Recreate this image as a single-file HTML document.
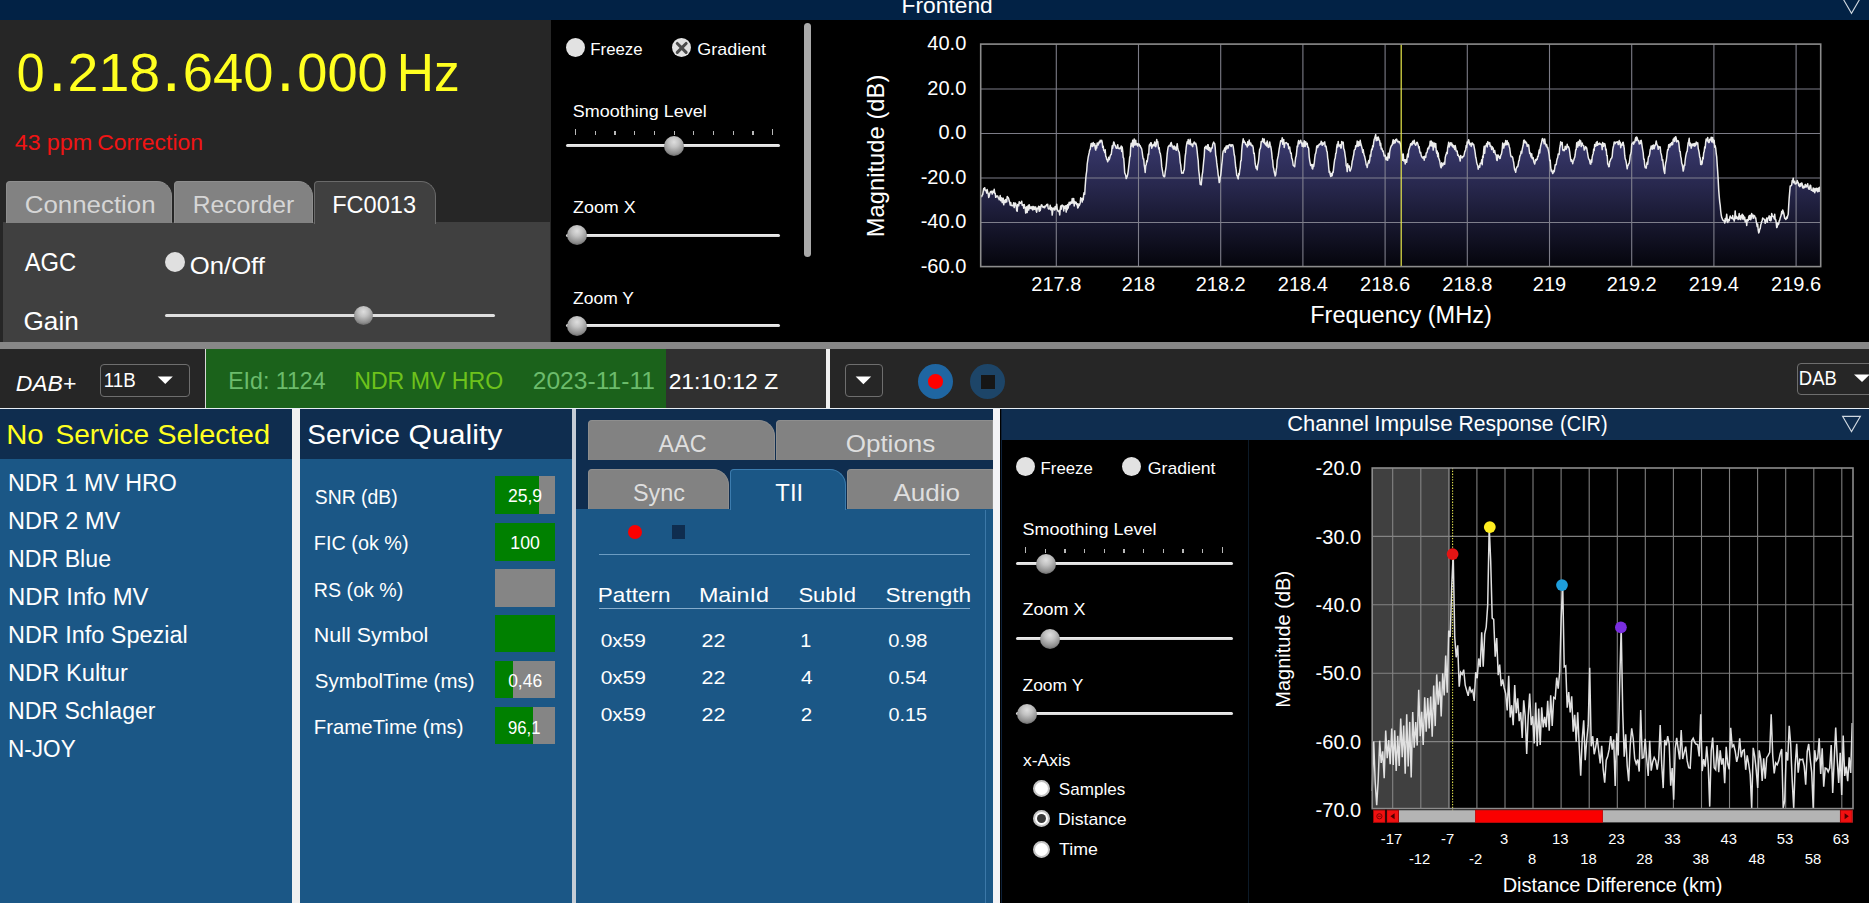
<!DOCTYPE html>
<html lang="en"><head><meta charset="utf-8"><title>DAB Receiver</title>
<style>
html,body{margin:0;padding:0;background:#000;}
body{width:1869px;height:903px;overflow:hidden;position:relative;font-family:"Liberation Sans", Arial, sans-serif;}
#bg div,#wd div,#ct div{position:absolute;}
svg{position:absolute;left:0;top:0;}
</style></head><body>
<div id="bg"><div style="left:0.0px;top:0.0px;width:1869.0px;height:20.4px;background:#022245;"></div>
<div style="left:0.0px;top:20.4px;width:550.5px;height:322.0px;background:#262626;"></div>
<div style="left:3.2px;top:221.5px;width:547.3px;height:120.5px;background:#404040;"></div>
<div style="left:550.5px;top:20.4px;width:1318.5px;height:321.6px;background:#000;"></div>
<div style="left:804.2px;top:22.8px;width:7.2px;height:234.0px;background:#a9a9a9;border-radius:3.6px;"></div>
<div style="left:0.0px;top:341.8px;width:1869.0px;height:7.3px;background:#878787;"></div>
<div style="left:0.0px;top:349.2px;width:1869.0px;height:58.6px;background:#262626;"></div>
<div style="left:666.0px;top:349.2px;width:160.0px;height:58.6px;background:#303030;"></div>
<div style="left:204.6px;top:349.2px;width:1.3px;height:58.6px;background:#d8d8d8;"></div>
<div style="left:205.9px;top:349.2px;width:460.1px;height:58.4px;background:#1b621b;"></div>
<div style="left:826.0px;top:349.2px;width:4.3px;height:59.4px;background:#f0f0f0;"></div>
<div style="left:0.0px;top:407.6px;width:1869.0px;height:1.5px;background:#e8eef4;"></div>
<div style="left:0.0px;top:409.1px;width:292.4px;height:494.0px;background:#1b5786;"></div>
<div style="left:0.0px;top:409.1px;width:292.4px;height:50.4px;background:#0f2d4f;"></div>
<div style="left:292.4px;top:409.1px;width:7.8px;height:494.0px;background:#f0f0f0;"></div>
<div style="left:300.2px;top:409.1px;width:272.0px;height:494.0px;background:#1b5786;"></div>
<div style="left:300.2px;top:409.1px;width:272.0px;height:50.4px;background:#0f2d4f;"></div>
<div style="left:572.2px;top:409.1px;width:4.0px;height:494.0px;background:#c4ccd6;"></div>
<div style="left:576.2px;top:409.1px;width:416.8px;height:494.0px;background:#1b5786;"></div>
<div style="left:576.2px;top:409.1px;width:416.8px;height:100.3px;background:#0f2d4f;"></div>
<div style="left:993.0px;top:409.1px;width:7.7px;height:494.0px;background:#f3f3f6;"></div>
<div style="left:1000.2px;top:409.1px;width:868.8px;height:494.0px;background:#000;"></div>
<div style="left:1000.6px;top:409.1px;width:868.8px;height:30.8px;background:#0f2d4f;"></div>
<div style="left:1000.6px;top:409.1px;width:1.2px;height:494.0px;background:#0c2038;"></div>
<div style="left:1248.0px;top:439.9px;width:1.2px;height:465.0px;background:#0c1a28;"></div></div>
<div id="wd"><div style="left:6.0px;top:181.2px;width:166.0px;height:41.8px;background:#828282;border-radius:4px 15px 0 0;box-sizing:border-box;border:1.2px solid #8e8e8e;border-bottom:none;"></div>
<div style="left:174.0px;top:181.2px;width:139.0px;height:41.8px;background:#828282;border-radius:4px 15px 0 0;box-sizing:border-box;border:1.2px solid #8e8e8e;border-bottom:none;"></div>
<div style="left:314.2px;top:181.2px;width:121.8px;height:42.8px;background:#404040;border-radius:4px 15px 0 0;box-sizing:border-box;border:1.2px solid #6a6a6a;border-bottom:none;"></div>
<div style="left:588.2px;top:420.1px;width:186.4px;height:40.2px;background:#828282;border-radius:4px 16px 0 0;box-sizing:border-box;border:1.2px solid #8e8e8e;border-bottom:none;"></div>
<div style="left:776.4px;top:420.1px;width:216.6px;height:40.2px;background:#828282;border-radius:4px 0px 0 0;box-sizing:border-box;border:1.2px solid #8e8e8e;border-bottom:none;"></div>
<div style="left:588.2px;top:468.9px;width:140.8px;height:40.5px;background:#828282;border-radius:4px 16px 0 0;box-sizing:border-box;border:1.2px solid #8e8e8e;border-bottom:none;"></div>
<div style="left:847.2px;top:468.9px;width:145.8px;height:40.5px;background:#828282;border-radius:4px 0px 0 0;box-sizing:border-box;border:1.2px solid #8e8e8e;border-bottom:none;"></div>
<div style="left:730.4px;top:468.9px;width:115.4px;height:41.1px;background:#1b5786;border-radius:4px 16px 0 0;box-sizing:border-box;border:1.2px solid #3c7cae;border-bottom:none;"></div>
<div style="left:985.2px;top:510.0px;width:1.0px;height:394.0px;background:#3c78a8;"></div>
<div style="left:598.8px;top:553.9px;width:371.4px;height:1.0px;background:#6c9cc2;"></div>
<div style="left:599.0px;top:607.8px;width:371.0px;height:1.1px;background:#86accc;"></div>
<div style="left:628.0px;top:525.0px;width:14.0px;height:14.0px;background:#fa0000;border-radius:50%;"></div>
<div style="left:672.0px;top:525.2px;width:13.3px;height:13.7px;background:#0f2d4f;"></div>
<div style="left:100.0px;top:364.3px;width:90.0px;height:32.4px;background:transparent;box-sizing:border-box;border:1.3px solid #6e6e6e;border-radius:4px;"></div>
<div style="left:845.3px;top:364.3px;width:37.8px;height:32.4px;background:transparent;box-sizing:border-box;border:1.3px solid #6e6e6e;border-radius:4px;"></div>
<div style="left:1797.2px;top:362.5px;width:90.0px;height:32.2px;background:transparent;box-sizing:border-box;border:1.3px solid #6e6e6e;border-radius:4px;"></div>
<div style="left:917.9px;top:364.2px;width:35.0px;height:35.0px;background:#1f66a2;border-radius:50%;"></div>
<div style="left:928.1px;top:374.4px;width:14.6px;height:14.6px;background:#ff0000;border-radius:50%;"></div>
<div style="left:970.3px;top:364.2px;width:35.0px;height:35.0px;background:#1d4568;border-radius:50%;"></div>
<div style="left:980.6px;top:374.5px;width:14.4px;height:14.4px;background:#161616;"></div>
<div style="left:495.1px;top:476.1px;width:59.9px;height:37.5px;background:#858585;"></div>
<div style="left:495.1px;top:476.1px;width:44.0px;height:37.5px;background:#008000;"></div>
<div style="left:495.1px;top:523.1px;width:59.9px;height:37.5px;background:#858585;"></div>
<div style="left:495.1px;top:523.1px;width:60.0px;height:37.5px;background:#008000;"></div>
<div style="left:495.1px;top:569.2px;width:59.9px;height:37.5px;background:#858585;"></div>
<div style="left:495.1px;top:614.8px;width:59.9px;height:37.5px;background:#858585;"></div>
<div style="left:495.1px;top:614.8px;width:60.0px;height:37.5px;background:#008000;"></div>
<div style="left:495.1px;top:660.6px;width:59.9px;height:37.5px;background:#858585;"></div>
<div style="left:495.1px;top:660.6px;width:17.9px;height:37.5px;background:#008000;"></div>
<div style="left:495.1px;top:706.7px;width:59.9px;height:37.5px;background:#858585;"></div>
<div style="left:495.1px;top:706.7px;width:37.9px;height:37.5px;background:#008000;"></div></div>
<svg width="1869" height="903" viewBox="0 0 1869 903">
<defs><linearGradient id="spg" gradientUnits="userSpaceOnUse" x1="0" y1="118" x2="0" y2="266.6"><stop offset="0" stop-color="#41417c"/><stop offset="0.45" stop-color="#28284e"/><stop offset="1" stop-color="#05050c"/></linearGradient></defs>
<polygon fill="url(#spg)" points="980.7,266.6 980.7,197.1 981.2,195.7 981.7,196.6 982.2,195.0 982.7,194.6 983.2,191.4 983.7,188.4 984.2,189.2 984.7,187.7 985.2,190.6 985.7,190.1 986.2,190.4 986.7,193.1 987.2,189.6 987.7,192.2 988.2,193.4 988.7,197.5 989.2,196.2 989.7,193.9 990.2,192.3 990.7,191.5 991.2,192.2 991.7,191.2 992.2,194.0 992.7,191.2 993.2,191.2 993.7,192.5 994.2,189.3 994.7,193.2 995.2,193.3 995.7,197.3 996.2,196.9 996.7,195.9 997.2,196.0 997.7,195.9 998.2,197.7 998.7,198.3 999.2,199.7 999.7,198.5 1000.2,195.5 1000.7,200.7 1001.2,198.7 1001.7,197.8 1002.2,202.6 1002.7,199.7 1003.2,198.2 1003.7,204.8 1004.2,200.6 1004.7,200.3 1005.2,202.5 1005.7,199.6 1006.2,200.4 1006.7,201.9 1007.2,196.5 1007.7,197.3 1008.2,197.5 1008.7,198.7 1009.2,201.1 1009.7,202.3 1010.2,205.0 1010.7,202.4 1011.2,205.6 1011.7,205.5 1012.2,205.5 1012.7,205.8 1013.2,205.8 1013.7,202.7 1014.2,207.6 1014.7,205.0 1015.2,203.0 1015.7,203.5 1016.2,205.8 1016.7,210.6 1017.2,211.1 1017.7,204.5 1018.2,205.7 1018.7,205.8 1019.2,201.8 1019.7,202.3 1020.2,203.4 1020.7,203.2 1021.2,202.9 1021.7,201.3 1022.2,205.3 1022.7,205.1 1023.2,204.9 1023.7,208.2 1024.2,204.5 1024.7,206.6 1025.2,207.5 1025.7,213.1 1026.2,210.0 1026.7,206.8 1027.2,212.5 1027.7,207.7 1028.2,205.6 1028.7,210.1 1029.2,204.7 1029.7,207.2 1030.2,208.6 1030.7,206.9 1031.2,207.2 1031.7,208.7 1032.2,206.5 1032.7,209.9 1033.2,209.7 1033.7,206.5 1034.2,207.6 1034.7,209.3 1035.2,206.9 1035.7,207.0 1036.2,210.9 1036.7,212.2 1037.2,208.2 1037.7,208.8 1038.2,208.0 1038.7,206.2 1039.2,211.3 1039.7,206.7 1040.2,210.5 1040.7,208.1 1041.2,205.2 1041.7,204.8 1042.2,205.9 1042.7,206.8 1043.2,207.4 1043.7,207.3 1044.2,206.3 1044.7,207.8 1045.2,206.4 1045.7,205.9 1046.2,205.7 1046.7,204.4 1047.2,205.7 1047.7,204.3 1048.2,208.4 1048.7,209.1 1049.2,209.0 1049.7,208.0 1050.2,205.3 1050.7,209.8 1051.2,209.5 1051.7,207.5 1052.2,215.1 1052.7,211.0 1053.2,208.5 1053.7,208.0 1054.2,208.4 1054.7,210.1 1055.2,206.4 1055.7,207.2 1056.2,209.0 1056.7,204.2 1057.2,209.1 1057.7,210.6 1058.2,211.4 1058.7,211.7 1059.2,210.4 1059.7,215.0 1060.2,209.5 1060.7,206.1 1061.2,209.2 1061.7,205.5 1062.2,205.0 1062.7,206.0 1063.2,205.8 1063.7,211.0 1064.2,206.8 1064.7,208.3 1065.2,205.7 1065.7,206.4 1066.2,212.1 1066.7,205.5 1067.2,209.8 1067.7,204.5 1068.2,208.1 1068.7,204.3 1069.2,202.2 1069.7,204.8 1070.2,204.1 1070.7,202.1 1071.2,202.7 1071.7,203.3 1072.2,198.6 1072.7,201.2 1073.2,203.1 1073.7,198.5 1074.2,206.0 1074.7,201.5 1075.2,203.6 1075.7,202.2 1076.2,202.5 1076.7,204.7 1077.2,203.7 1077.7,207.9 1078.2,207.4 1078.7,204.1 1079.2,205.8 1079.7,204.4 1080.2,202.9 1080.7,197.8 1081.2,198.9 1081.7,198.7 1082.2,202.1 1082.7,198.2 1083.2,199.9 1083.7,194.5 1084.2,192.5 1084.7,194.2 1085.2,186.1 1085.7,179.4 1086.2,174.3 1086.7,171.0 1087.2,164.0 1087.7,160.7 1088.2,157.1 1088.7,154.8 1089.2,152.7 1089.7,149.9 1090.2,149.5 1090.7,146.2 1091.2,143.4 1091.7,143.5 1092.2,146.3 1092.7,146.5 1093.2,142.4 1093.7,144.2 1094.2,145.6 1094.7,143.8 1095.2,148.1 1095.7,150.1 1096.2,145.8 1096.7,147.9 1097.2,143.1 1097.7,143.7 1098.2,145.1 1098.7,143.0 1099.2,141.9 1099.7,142.8 1100.2,140.2 1100.7,141.8 1101.2,140.8 1101.7,140.3 1102.2,142.4 1102.7,147.3 1103.2,146.2 1103.7,150.4 1104.2,150.2 1104.7,152.6 1105.2,149.8 1105.7,156.3 1106.2,156.9 1106.7,159.4 1107.2,159.8 1107.7,161.8 1108.2,160.3 1108.7,157.3 1109.2,159.8 1109.7,158.1 1110.2,155.9 1110.7,154.8 1111.2,154.6 1111.7,150.8 1112.2,145.7 1112.7,148.2 1113.2,145.1 1113.7,141.9 1114.2,142.8 1114.7,145.1 1115.2,145.2 1115.7,147.0 1116.2,148.3 1116.7,148.3 1117.2,146.7 1117.7,144.7 1118.2,148.3 1118.7,148.5 1119.2,148.5 1119.7,148.7 1120.2,147.4 1120.7,148.5 1121.2,146.1 1121.7,151.5 1122.2,146.9 1122.7,151.1 1123.2,157.6 1123.7,158.0 1124.2,164.9 1124.7,172.9 1125.2,173.9 1125.7,175.2 1126.2,178.6 1126.7,177.5 1127.2,176.4 1127.7,174.3 1128.2,171.1 1128.7,166.7 1129.2,162.6 1129.7,157.1 1130.2,156.1 1130.7,147.2 1131.2,143.2 1131.7,146.0 1132.2,145.4 1132.7,140.2 1133.2,147.1 1133.7,142.5 1134.2,138.9 1134.7,145.1 1135.2,141.9 1135.7,140.2 1136.2,144.8 1136.7,143.8 1137.2,143.6 1137.7,146.0 1138.2,144.3 1138.7,143.9 1139.2,144.1 1139.7,146.0 1140.2,145.7 1140.7,147.3 1141.2,147.9 1141.7,149.0 1142.2,152.0 1142.7,156.1 1143.2,158.8 1143.7,158.7 1144.2,165.0 1144.7,168.0 1145.2,172.4 1145.7,165.7 1146.2,164.9 1146.7,160.8 1147.2,161.8 1147.7,158.5 1148.2,153.9 1148.7,154.7 1149.2,145.8 1149.7,144.2 1150.2,145.7 1150.7,142.8 1151.2,142.8 1151.7,148.2 1152.2,146.6 1152.7,145.5 1153.2,144.4 1153.7,144.6 1154.2,145.9 1154.7,142.0 1155.2,143.8 1155.7,146.7 1156.2,144.9 1156.7,139.4 1157.2,142.1 1157.7,141.5 1158.2,145.5 1158.7,148.9 1159.2,147.7 1159.7,152.8 1160.2,153.1 1160.7,156.0 1161.2,159.6 1161.7,166.4 1162.2,169.3 1162.7,172.2 1163.2,175.5 1163.7,176.2 1164.2,176.8 1164.7,176.4 1165.2,171.9 1165.7,169.1 1166.2,165.5 1166.7,159.6 1167.2,153.7 1167.7,149.9 1168.2,146.8 1168.7,146.4 1169.2,145.4 1169.7,145.2 1170.2,146.3 1170.7,143.4 1171.2,142.5 1171.7,144.7 1172.2,147.1 1172.7,146.1 1173.2,148.9 1173.7,149.0 1174.2,145.9 1174.7,149.0 1175.2,146.9 1175.7,148.7 1176.2,150.3 1176.7,147.3 1177.2,143.7 1177.7,147.7 1178.2,150.3 1178.7,151.4 1179.2,152.2 1179.7,156.7 1180.2,162.3 1180.7,164.9 1181.2,169.7 1181.7,173.2 1182.2,173.1 1182.7,172.7 1183.2,173.1 1183.7,170.3 1184.2,169.9 1184.7,162.6 1185.2,156.2 1185.7,152.9 1186.2,147.3 1186.7,144.1 1187.2,141.7 1187.7,143.4 1188.2,139.5 1188.7,141.2 1189.2,144.3 1189.7,143.1 1190.2,139.2 1190.7,144.8 1191.2,143.8 1191.7,144.1 1192.2,145.8 1192.7,146.6 1193.2,143.5 1193.7,143.4 1194.2,142.0 1194.7,142.9 1195.2,144.3 1195.7,143.2 1196.2,145.0 1196.7,147.4 1197.2,151.7 1197.7,157.0 1198.2,160.7 1198.7,170.0 1199.2,174.2 1199.7,178.8 1200.2,184.5 1200.7,183.4 1201.2,184.8 1201.7,180.0 1202.2,174.8 1202.7,171.8 1203.2,166.5 1203.7,161.0 1204.2,156.5 1204.7,147.5 1205.2,147.3 1205.7,146.2 1206.2,148.3 1206.7,146.2 1207.2,149.5 1207.7,144.8 1208.2,144.7 1208.7,150.3 1209.2,147.8 1209.7,147.6 1210.2,151.7 1210.7,151.5 1211.2,149.2 1211.7,147.7 1212.2,147.9 1212.7,144.6 1213.2,143.3 1213.7,142.1 1214.2,143.4 1214.7,143.7 1215.2,147.6 1215.7,155.3 1216.2,157.3 1216.7,162.4 1217.2,166.4 1217.7,170.2 1218.2,175.1 1218.7,177.6 1219.2,182.6 1219.7,181.4 1220.2,177.5 1220.7,175.3 1221.2,170.8 1221.7,165.2 1222.2,161.0 1222.7,154.2 1223.2,151.0 1223.7,150.6 1224.2,150.0 1224.7,148.1 1225.2,152.3 1225.7,148.0 1226.2,145.9 1226.7,148.9 1227.2,145.8 1227.7,146.2 1228.2,148.0 1228.7,145.2 1229.2,145.1 1229.7,144.5 1230.2,144.7 1230.7,146.0 1231.2,146.5 1231.7,144.8 1232.2,145.1 1232.7,144.9 1233.2,146.7 1233.7,150.5 1234.2,154.5 1234.7,156.5 1235.2,162.0 1235.7,167.2 1236.2,169.9 1236.7,175.2 1237.2,175.9 1237.7,177.7 1238.2,178.9 1238.7,173.5 1239.2,174.9 1239.7,170.2 1240.2,167.8 1240.7,161.0 1241.2,160.8 1241.7,151.0 1242.2,145.5 1242.7,142.1 1243.2,138.8 1243.7,142.3 1244.2,140.9 1244.7,142.6 1245.2,142.5 1245.7,144.5 1246.2,144.9 1246.7,144.6 1247.2,146.9 1247.7,141.7 1248.2,145.6 1248.7,143.2 1249.2,140.1 1249.7,144.6 1250.2,144.7 1250.7,143.0 1251.2,144.9 1251.7,145.8 1252.2,145.4 1252.7,145.9 1253.2,147.7 1253.7,153.5 1254.2,153.0 1254.7,158.2 1255.2,163.7 1255.7,166.3 1256.2,168.4 1256.7,166.4 1257.2,169.8 1257.7,165.0 1258.2,163.1 1258.7,159.5 1259.2,153.8 1259.7,149.2 1260.2,148.7 1260.7,146.8 1261.2,141.6 1261.7,141.8 1262.2,141.6 1262.7,138.6 1263.2,140.2 1263.7,142.6 1264.2,139.0 1264.7,143.6 1265.2,143.8 1265.7,145.0 1266.2,142.8 1266.7,145.9 1267.2,141.0 1267.7,143.9 1268.2,147.4 1268.7,147.3 1269.2,146.5 1269.7,141.9 1270.2,145.2 1270.7,146.3 1271.2,149.0 1271.7,152.9 1272.2,158.4 1272.7,160.7 1273.2,167.0 1273.7,168.5 1274.2,171.8 1274.7,173.8 1275.2,176.0 1275.7,174.7 1276.2,169.8 1276.7,167.4 1277.2,160.3 1277.7,158.2 1278.2,155.9 1278.7,152.4 1279.2,148.9 1279.7,146.2 1280.2,143.4 1280.7,140.7 1281.2,141.1 1281.7,141.4 1282.2,137.8 1282.7,144.3 1283.2,143.2 1283.7,139.4 1284.2,147.4 1284.7,144.0 1285.2,142.9 1285.7,142.8 1286.2,142.6 1286.7,143.2 1287.2,143.5 1287.7,144.8 1288.2,143.8 1288.7,148.8 1289.2,147.6 1289.7,147.1 1290.2,151.3 1290.7,153.2 1291.2,153.1 1291.7,158.3 1292.2,158.9 1292.7,161.7 1293.2,165.3 1293.7,165.8 1294.2,166.1 1294.7,166.6 1295.2,161.4 1295.7,157.2 1296.2,156.1 1296.7,151.4 1297.2,146.0 1297.7,146.6 1298.2,142.3 1298.7,140.4 1299.2,143.7 1299.7,142.2 1300.2,142.1 1300.7,140.2 1301.2,142.9 1301.7,142.3 1302.2,146.3 1302.7,143.9 1303.2,143.3 1303.7,146.8 1304.2,140.8 1304.7,142.6 1305.2,146.4 1305.7,141.7 1306.2,144.4 1306.7,143.7 1307.2,143.2 1307.7,147.2 1308.2,147.0 1308.7,148.4 1309.2,156.6 1309.7,160.6 1310.2,163.2 1310.7,165.6 1311.2,165.6 1311.7,164.5 1312.2,168.4 1312.7,168.9 1313.2,164.4 1313.7,166.5 1314.2,163.5 1314.7,158.4 1315.2,154.6 1315.7,153.3 1316.2,150.8 1316.7,146.3 1317.2,145.8 1317.7,147.5 1318.2,145.3 1318.7,145.6 1319.2,144.2 1319.7,144.5 1320.2,143.5 1320.7,144.0 1321.2,141.3 1321.7,142.1 1322.2,145.3 1322.7,143.0 1323.2,144.6 1323.7,143.3 1324.2,142.5 1324.7,141.9 1325.2,146.4 1325.7,145.8 1326.2,146.8 1326.7,150.9 1327.2,151.8 1327.7,158.1 1328.2,160.7 1328.7,167.4 1329.2,172.4 1329.7,171.4 1330.2,174.3 1330.7,176.4 1331.2,173.6 1331.7,176.1 1332.2,175.5 1332.7,171.9 1333.2,172.1 1333.7,167.4 1334.2,163.1 1334.7,159.4 1335.2,158.3 1335.7,153.6 1336.2,153.0 1336.7,147.3 1337.2,144.3 1337.7,147.0 1338.2,141.4 1338.7,145.7 1339.2,145.0 1339.7,146.2 1340.2,144.8 1340.7,148.0 1341.2,147.9 1341.7,141.4 1342.2,142.1 1342.7,143.7 1343.2,142.2 1343.7,148.7 1344.2,149.6 1344.7,152.0 1345.2,155.9 1345.7,159.2 1346.2,166.0 1346.7,166.4 1347.2,171.6 1347.7,163.8 1348.2,167.2 1348.7,166.2 1349.2,165.9 1349.7,170.7 1350.2,170.9 1350.7,169.6 1351.2,168.2 1351.7,165.4 1352.2,161.3 1352.7,159.6 1353.2,156.8 1353.7,154.8 1354.2,150.4 1354.7,149.5 1355.2,149.5 1355.7,145.7 1356.2,145.6 1356.7,146.6 1357.2,141.1 1357.7,142.9 1358.2,146.2 1358.7,141.7 1359.2,143.2 1359.7,145.4 1360.2,140.2 1360.7,143.6 1361.2,145.0 1361.7,147.0 1362.2,149.0 1362.7,152.5 1363.2,149.7 1363.7,153.5 1364.2,155.4 1364.7,156.6 1365.2,159.1 1365.7,161.4 1366.2,165.0 1366.7,164.9 1367.2,167.5 1367.7,164.3 1368.2,162.6 1368.7,160.6 1369.2,162.9 1369.7,160.4 1370.2,155.1 1370.7,156.5 1371.2,151.7 1371.7,148.9 1372.2,149.6 1372.7,145.7 1373.2,146.8 1373.7,142.3 1374.2,139.4 1374.7,138.2 1375.2,136.4 1375.7,134.6 1376.2,140.7 1376.7,139.8 1377.2,137.6 1377.7,140.2 1378.2,137.1 1378.7,138.6 1379.2,140.1 1379.7,140.8 1380.2,145.6 1380.7,143.3 1381.2,148.9 1381.7,148.1 1382.2,149.5 1382.7,151.3 1383.2,151.1 1383.7,153.6 1384.2,156.1 1384.7,155.9 1385.2,155.3 1385.7,159.1 1386.2,159.9 1386.7,157.3 1387.2,157.5 1387.7,160.3 1388.2,153.2 1388.7,153.4 1389.2,158.0 1389.7,151.6 1390.2,149.1 1390.7,147.2 1391.2,146.1 1391.7,145.2 1392.2,145.0 1392.7,142.0 1393.2,139.7 1393.7,143.6 1394.2,142.5 1394.7,140.5 1395.2,142.7 1395.7,139.6 1396.2,140.3 1396.7,139.1 1397.2,141.1 1397.7,141.8 1398.2,141.4 1398.7,141.3 1399.2,142.7 1399.7,141.8 1400.2,143.2 1400.7,145.5 1401.2,149.4 1401.7,154.6 1402.2,156.0 1402.7,160.3 1403.2,153.9 1403.7,160.9 1404.2,160.0 1404.7,159.7 1405.2,163.9 1405.7,160.0 1406.2,159.5 1406.7,162.3 1407.2,156.5 1407.7,154.0 1408.2,157.0 1408.7,150.3 1409.2,149.1 1409.7,147.4 1410.2,145.7 1410.7,143.8 1411.2,145.0 1411.7,143.1 1412.2,144.7 1412.7,141.3 1413.2,143.4 1413.7,142.0 1414.2,140.2 1414.7,143.7 1415.2,144.6 1415.7,145.3 1416.2,144.1 1416.7,142.4 1417.2,142.3 1417.7,143.6 1418.2,145.2 1418.7,147.9 1419.2,146.8 1419.7,151.4 1420.2,152.9 1420.7,152.4 1421.2,155.5 1421.7,156.6 1422.2,157.4 1422.7,158.0 1423.2,156.7 1423.7,157.4 1424.2,160.2 1424.7,156.3 1425.2,156.4 1425.7,157.5 1426.2,152.9 1426.7,152.8 1427.2,151.9 1427.7,148.7 1428.2,147.9 1428.7,148.8 1429.2,146.1 1429.7,146.4 1430.2,141.3 1430.7,145.6 1431.2,141.1 1431.7,146.0 1432.2,143.8 1432.7,142.2 1433.2,150.1 1433.7,146.0 1434.2,143.1 1434.7,144.6 1435.2,147.2 1435.7,143.4 1436.2,150.1 1436.7,153.2 1437.2,151.0 1437.7,156.8 1438.2,152.9 1438.7,157.9 1439.2,159.4 1439.7,161.0 1440.2,164.0 1440.7,166.9 1441.2,167.8 1441.7,162.7 1442.2,163.9 1442.7,165.7 1443.2,163.8 1443.7,164.0 1444.2,162.2 1444.7,164.3 1445.2,157.7 1445.7,155.6 1446.2,154.3 1446.7,152.2 1447.2,153.6 1447.7,147.4 1448.2,145.8 1448.7,142.2 1449.2,147.0 1449.7,145.3 1450.2,143.5 1450.7,142.8 1451.2,145.0 1451.7,143.0 1452.2,146.2 1452.7,144.8 1453.2,147.4 1453.7,145.8 1454.2,147.5 1454.7,149.4 1455.2,145.6 1455.7,147.9 1456.2,151.1 1456.7,151.1 1457.2,151.1 1457.7,155.3 1458.2,154.8 1458.7,156.3 1459.2,156.7 1459.7,158.5 1460.2,161.0 1460.7,155.4 1461.2,157.1 1461.7,157.6 1462.2,157.9 1462.7,156.5 1463.2,156.8 1463.7,156.3 1464.2,154.6 1464.7,151.9 1465.2,150.9 1465.7,149.4 1466.2,145.6 1466.7,147.2 1467.2,141.9 1467.7,143.7 1468.2,141.2 1468.7,139.8 1469.2,142.1 1469.7,144.7 1470.2,143.6 1470.7,143.4 1471.2,146.4 1471.7,144.1 1472.2,142.9 1472.7,144.4 1473.2,144.1 1473.7,144.6 1474.2,147.3 1474.7,149.8 1475.2,153.2 1475.7,157.3 1476.2,159.0 1476.7,162.6 1477.2,164.4 1477.7,165.5 1478.2,169.2 1478.7,166.9 1479.2,166.1 1479.7,167.3 1480.2,163.3 1480.7,163.3 1481.2,163.3 1481.7,159.7 1482.2,164.8 1482.7,155.9 1483.2,157.5 1483.7,150.3 1484.2,146.3 1484.7,153.3 1485.2,146.1 1485.7,145.8 1486.2,145.6 1486.7,143.4 1487.2,147.0 1487.7,141.7 1488.2,142.5 1488.7,143.5 1489.2,144.2 1489.7,142.6 1490.2,146.3 1490.7,145.5 1491.2,147.2 1491.7,149.6 1492.2,146.8 1492.7,147.8 1493.2,148.2 1493.7,152.3 1494.2,151.3 1494.7,150.5 1495.2,153.5 1495.7,154.7 1496.2,155.0 1496.7,159.9 1497.2,160.5 1497.7,155.1 1498.2,155.1 1498.7,157.0 1499.2,156.5 1499.7,158.6 1500.2,158.4 1500.7,155.1 1501.2,154.9 1501.7,152.6 1502.2,149.3 1502.7,143.0 1503.2,144.0 1503.7,148.1 1504.2,145.8 1504.7,143.3 1505.2,145.0 1505.7,140.6 1506.2,143.6 1506.7,144.7 1507.2,140.8 1507.7,144.4 1508.2,142.8 1508.7,144.1 1509.2,146.5 1509.7,148.1 1510.2,152.0 1510.7,155.4 1511.2,156.7 1511.7,156.2 1512.2,156.7 1512.7,157.6 1513.2,160.4 1513.7,162.6 1514.2,167.0 1514.7,170.0 1515.2,170.3 1515.7,172.2 1516.2,168.6 1516.7,167.6 1517.2,166.6 1517.7,166.8 1518.2,164.8 1518.7,161.0 1519.2,160.7 1519.7,156.6 1520.2,155.4 1520.7,154.2 1521.2,151.2 1521.7,153.1 1522.2,149.5 1522.7,147.1 1523.2,145.3 1523.7,140.5 1524.2,140.0 1524.7,142.7 1525.2,141.2 1525.7,141.7 1526.2,143.4 1526.7,143.1 1527.2,146.5 1527.7,145.3 1528.2,144.8 1528.7,145.2 1529.2,149.8 1529.7,153.4 1530.2,152.9 1530.7,155.4 1531.2,157.1 1531.7,153.8 1532.2,158.6 1532.7,158.7 1533.2,157.6 1533.7,161.2 1534.2,162.7 1534.7,164.0 1535.2,161.3 1535.7,159.4 1536.2,160.5 1536.7,159.0 1537.2,159.4 1537.7,156.2 1538.2,156.4 1538.7,153.3 1539.2,150.1 1539.7,152.9 1540.2,148.4 1540.7,145.6 1541.2,144.1 1541.7,141.8 1542.2,139.1 1542.7,138.6 1543.2,140.3 1543.7,141.0 1544.2,143.8 1544.7,138.9 1545.2,142.7 1545.7,144.0 1546.2,146.1 1546.7,144.8 1547.2,147.7 1547.7,147.2 1548.2,149.7 1548.7,152.2 1549.2,155.1 1549.7,160.8 1550.2,160.1 1550.7,167.0 1551.2,171.1 1551.7,170.0 1552.2,172.0 1552.7,173.6 1553.2,172.7 1553.7,170.6 1554.2,171.7 1554.7,168.5 1555.2,164.7 1555.7,164.9 1556.2,164.3 1556.7,160.8 1557.2,158.7 1557.7,157.6 1558.2,154.0 1558.7,153.9 1559.2,154.4 1559.7,148.2 1560.2,146.0 1560.7,141.8 1561.2,144.6 1561.7,144.0 1562.2,142.4 1562.7,149.8 1563.2,150.4 1563.7,149.8 1564.2,150.6 1564.7,149.5 1565.2,146.3 1565.7,147.4 1566.2,149.2 1566.7,147.7 1567.2,144.3 1567.7,146.9 1568.2,146.5 1568.7,147.2 1569.2,148.8 1569.7,151.8 1570.2,156.0 1570.7,159.3 1571.2,161.3 1571.7,159.8 1572.2,161.4 1572.7,163.7 1573.2,161.2 1573.7,160.3 1574.2,158.4 1574.7,157.3 1575.2,154.5 1575.7,149.7 1576.2,149.6 1576.7,142.7 1577.2,143.2 1577.7,147.1 1578.2,141.6 1578.7,142.6 1579.2,145.6 1579.7,140.1 1580.2,142.4 1580.7,141.0 1581.2,146.6 1581.7,143.3 1582.2,143.1 1582.7,144.7 1583.2,145.8 1583.7,145.7 1584.2,150.1 1584.7,149.2 1585.2,148.3 1585.7,146.6 1586.2,147.5 1586.7,148.1 1587.2,151.2 1587.7,153.8 1588.2,157.1 1588.7,159.0 1589.2,159.5 1589.7,161.1 1590.2,163.9 1590.7,164.1 1591.2,159.8 1591.7,162.2 1592.2,157.1 1592.7,154.8 1593.2,153.7 1593.7,148.9 1594.2,150.5 1594.7,144.4 1595.2,145.3 1595.7,146.3 1596.2,142.6 1596.7,145.2 1597.2,141.5 1597.7,145.2 1598.2,143.9 1598.7,143.6 1599.2,144.1 1599.7,143.1 1600.2,144.2 1600.7,144.1 1601.2,144.6 1601.7,144.3 1602.2,149.6 1602.7,142.5 1603.2,144.5 1603.7,146.2 1604.2,143.8 1604.7,143.6 1605.2,145.3 1605.7,150.0 1606.2,149.2 1606.7,155.4 1607.2,155.5 1607.7,164.1 1608.2,164.3 1608.7,166.7 1609.2,166.6 1609.7,161.5 1610.2,161.1 1610.7,159.3 1611.2,158.5 1611.7,158.0 1612.2,156.2 1612.7,150.2 1613.2,147.2 1613.7,145.4 1614.2,142.0 1614.7,142.7 1615.2,143.6 1615.7,142.3 1616.2,142.2 1616.7,142.1 1617.2,142.5 1617.7,141.8 1618.2,144.5 1618.7,144.4 1619.2,140.6 1619.7,143.5 1620.2,142.3 1620.7,147.7 1621.2,145.2 1621.7,144.0 1622.2,145.2 1622.7,142.4 1623.2,142.3 1623.7,145.5 1624.2,148.1 1624.7,155.2 1625.2,158.8 1625.7,159.8 1626.2,162.1 1626.7,165.6 1627.2,168.8 1627.7,165.8 1628.2,165.3 1628.7,163.8 1629.2,163.2 1629.7,159.8 1630.2,155.5 1630.7,153.9 1631.2,152.0 1631.7,144.6 1632.2,143.2 1632.7,143.2 1633.2,142.0 1633.7,144.2 1634.2,142.0 1634.7,142.4 1635.2,139.7 1635.7,137.6 1636.2,140.6 1636.7,137.0 1637.2,137.9 1637.7,140.0 1638.2,140.9 1638.7,140.5 1639.2,144.0 1639.7,142.8 1640.2,143.7 1640.7,140.6 1641.2,140.3 1641.7,143.4 1642.2,146.9 1642.7,150.0 1643.2,152.9 1643.7,159.3 1644.2,159.0 1644.7,165.3 1645.2,167.7 1645.7,167.2 1646.2,168.1 1646.7,164.1 1647.2,162.3 1647.7,164.3 1648.2,158.4 1648.7,156.4 1649.2,156.2 1649.7,153.8 1650.2,149.7 1650.7,148.7 1651.2,145.9 1651.7,147.8 1652.2,149.2 1652.7,145.6 1653.2,148.6 1653.7,144.9 1654.2,148.7 1654.7,146.3 1655.2,145.4 1655.7,144.0 1656.2,141.0 1656.7,143.5 1657.2,144.8 1657.7,146.0 1658.2,149.3 1658.7,146.6 1659.2,146.8 1659.7,147.8 1660.2,147.0 1660.7,152.4 1661.2,154.1 1661.7,156.4 1662.2,160.5 1662.7,159.7 1663.2,164.2 1663.7,169.0 1664.2,171.4 1664.7,173.4 1665.2,166.5 1665.7,162.4 1666.2,161.0 1666.7,157.1 1667.2,152.4 1667.7,149.5 1668.2,149.8 1668.7,144.8 1669.2,144.7 1669.7,147.1 1670.2,143.8 1670.7,145.6 1671.2,144.2 1671.7,142.4 1672.2,144.7 1672.7,144.3 1673.2,139.3 1673.7,140.7 1674.2,138.1 1674.7,141.4 1675.2,137.5 1675.7,136.7 1676.2,138.3 1676.7,141.9 1677.2,140.5 1677.7,141.1 1678.2,140.8 1678.7,142.2 1679.2,146.7 1679.7,151.4 1680.2,151.4 1680.7,156.6 1681.2,158.3 1681.7,163.3 1682.2,164.5 1682.7,167.1 1683.2,171.1 1683.7,169.0 1684.2,164.9 1684.7,165.5 1685.2,160.0 1685.7,156.3 1686.2,153.9 1686.7,151.9 1687.2,151.3 1687.7,146.3 1688.2,142.7 1688.7,141.4 1689.2,138.3 1689.7,145.7 1690.2,143.0 1690.7,144.1 1691.2,148.2 1691.7,146.1 1692.2,143.9 1692.7,145.4 1693.2,144.3 1693.7,143.8 1694.2,146.2 1694.7,143.6 1695.2,145.8 1695.7,145.0 1696.2,142.1 1696.7,144.1 1697.2,143.4 1697.7,142.8 1698.2,148.3 1698.7,150.4 1699.2,152.8 1699.7,157.2 1700.2,158.0 1700.7,164.5 1701.2,161.3 1701.7,164.5 1702.2,163.0 1702.7,157.3 1703.2,158.9 1703.7,152.8 1704.2,151.6 1704.7,146.8 1705.2,148.0 1705.7,142.0 1706.2,138.9 1706.7,140.7 1707.2,140.5 1707.7,137.4 1708.2,141.8 1708.7,142.5 1709.2,142.4 1709.7,139.3 1710.2,140.0 1710.7,140.1 1711.2,137.2 1711.7,141.8 1712.2,139.8 1712.7,137.5 1713.2,142.7 1713.7,140.1 1714.2,140.5 1714.7,147.2 1715.2,145.8 1715.7,148.1 1716.2,153.3 1716.7,156.8 1717.2,164.6 1717.7,171.7 1718.2,180.1 1718.7,189.9 1719.2,196.2 1719.7,201.8 1720.2,205.3 1720.7,211.0 1721.2,214.8 1721.7,217.4 1722.2,218.5 1722.7,220.1 1723.2,220.1 1723.7,220.8 1724.2,220.7 1724.7,223.1 1725.2,218.6 1725.7,221.5 1726.2,218.6 1726.7,214.2 1727.2,219.2 1727.7,222.5 1728.2,219.6 1728.7,221.0 1729.2,220.8 1729.7,218.1 1730.2,215.9 1730.7,217.7 1731.2,217.5 1731.7,218.4 1732.2,218.5 1732.7,215.5 1733.2,219.2 1733.7,219.2 1734.2,221.0 1734.7,218.1 1735.2,210.9 1735.7,218.6 1736.2,216.3 1736.7,217.0 1737.2,218.6 1737.7,217.4 1738.2,219.5 1738.7,217.3 1739.2,213.6 1739.7,219.0 1740.2,215.8 1740.7,219.6 1741.2,217.0 1741.7,215.6 1742.2,214.3 1742.7,219.1 1743.2,215.3 1743.7,216.8 1744.2,219.5 1744.7,217.2 1745.2,221.8 1745.7,221.1 1746.2,220.1 1746.7,225.5 1747.2,219.7 1747.7,220.4 1748.2,220.7 1748.7,217.0 1749.2,215.8 1749.7,219.3 1750.2,215.2 1750.7,219.7 1751.2,218.3 1751.7,213.6 1752.2,216.0 1752.7,215.3 1753.2,218.3 1753.7,215.2 1754.2,215.8 1754.7,215.9 1755.2,218.2 1755.7,217.7 1756.2,221.3 1756.7,223.8 1757.2,226.6 1757.7,224.0 1758.2,230.1 1758.7,232.9 1759.2,231.9 1759.7,229.1 1760.2,228.6 1760.7,225.1 1761.2,223.5 1761.7,221.5 1762.2,220.5 1762.7,218.0 1763.2,218.5 1763.7,218.9 1764.2,219.2 1764.7,219.8 1765.2,223.3 1765.7,220.2 1766.2,220.7 1766.7,217.9 1767.2,222.3 1767.7,218.9 1768.2,218.0 1768.7,217.1 1769.2,215.9 1769.7,220.3 1770.2,216.7 1770.7,220.8 1771.2,219.8 1771.7,213.6 1772.2,215.3 1772.7,216.5 1773.2,216.6 1773.7,216.6 1774.2,218.7 1774.7,214.3 1775.2,219.6 1775.7,219.6 1776.2,222.5 1776.7,227.6 1777.2,227.0 1777.7,223.1 1778.2,224.7 1778.7,223.8 1779.2,220.8 1779.7,220.2 1780.2,217.9 1780.7,216.5 1781.2,215.0 1781.7,211.6 1782.2,213.7 1782.7,210.1 1783.2,211.6 1783.7,213.0 1784.2,215.5 1784.7,218.3 1785.2,218.5 1785.7,219.5 1786.2,219.0 1786.7,217.0 1787.2,218.2 1787.7,215.7 1788.2,214.5 1788.7,205.6 1789.2,197.9 1789.7,191.9 1790.2,186.0 1790.7,186.0 1791.2,185.6 1791.7,184.8 1792.2,180.6 1792.7,181.8 1793.2,178.2 1793.7,182.7 1794.2,182.8 1794.7,181.3 1795.2,184.1 1795.7,183.4 1796.2,183.7 1796.7,182.9 1797.2,180.6 1797.7,182.1 1798.2,182.6 1798.7,185.5 1799.2,185.8 1799.7,186.7 1800.2,183.6 1800.7,186.1 1801.2,183.8 1801.7,183.0 1802.2,183.8 1802.7,187.8 1803.2,185.9 1803.7,188.0 1804.2,186.8 1804.7,187.4 1805.2,184.4 1805.7,184.9 1806.2,187.0 1806.7,186.4 1807.2,185.9 1807.7,183.7 1808.2,187.3 1808.7,189.1 1809.2,189.2 1809.7,187.2 1810.2,185.2 1810.7,185.6 1811.2,190.2 1811.7,190.1 1812.2,190.3 1812.7,191.0 1813.2,187.9 1813.7,191.5 1814.2,188.5 1814.7,192.7 1815.2,190.9 1815.7,188.6 1816.2,190.7 1816.7,188.3 1817.2,189.2 1817.7,191.8 1818.2,188.2 1818.7,188.1 1819.2,191.3 1819.7,187.3 1820.2,190.3 1820.7,190.6 1820.7,266.6"/>
<path d="M1056.3 44.1V266.6M1138.5 44.1V266.6M1220.7 44.1V266.6M1302.9 44.1V266.6M1385.1 44.1V266.6M1467.3 44.1V266.6M1549.5 44.1V266.6M1631.7 44.1V266.6M1713.9 44.1V266.6M1796.1 44.1V266.6M980.7 89.0H1820.7M980.7 133.5H1820.7M980.7 178.0H1820.7M980.7 222.5H1820.7" stroke="#8a8a96" stroke-width="1.1" fill="none" opacity="0.9"/>
<polyline fill="none" stroke="#ececec" stroke-width="1.5" stroke-linejoin="round" points="980.7,197.1 981.2,195.7 981.7,196.6 982.2,195.0 982.7,194.6 983.2,191.4 983.7,188.4 984.2,189.2 984.7,187.7 985.2,190.6 985.7,190.1 986.2,190.4 986.7,193.1 987.2,189.6 987.7,192.2 988.2,193.4 988.7,197.5 989.2,196.2 989.7,193.9 990.2,192.3 990.7,191.5 991.2,192.2 991.7,191.2 992.2,194.0 992.7,191.2 993.2,191.2 993.7,192.5 994.2,189.3 994.7,193.2 995.2,193.3 995.7,197.3 996.2,196.9 996.7,195.9 997.2,196.0 997.7,195.9 998.2,197.7 998.7,198.3 999.2,199.7 999.7,198.5 1000.2,195.5 1000.7,200.7 1001.2,198.7 1001.7,197.8 1002.2,202.6 1002.7,199.7 1003.2,198.2 1003.7,204.8 1004.2,200.6 1004.7,200.3 1005.2,202.5 1005.7,199.6 1006.2,200.4 1006.7,201.9 1007.2,196.5 1007.7,197.3 1008.2,197.5 1008.7,198.7 1009.2,201.1 1009.7,202.3 1010.2,205.0 1010.7,202.4 1011.2,205.6 1011.7,205.5 1012.2,205.5 1012.7,205.8 1013.2,205.8 1013.7,202.7 1014.2,207.6 1014.7,205.0 1015.2,203.0 1015.7,203.5 1016.2,205.8 1016.7,210.6 1017.2,211.1 1017.7,204.5 1018.2,205.7 1018.7,205.8 1019.2,201.8 1019.7,202.3 1020.2,203.4 1020.7,203.2 1021.2,202.9 1021.7,201.3 1022.2,205.3 1022.7,205.1 1023.2,204.9 1023.7,208.2 1024.2,204.5 1024.7,206.6 1025.2,207.5 1025.7,213.1 1026.2,210.0 1026.7,206.8 1027.2,212.5 1027.7,207.7 1028.2,205.6 1028.7,210.1 1029.2,204.7 1029.7,207.2 1030.2,208.6 1030.7,206.9 1031.2,207.2 1031.7,208.7 1032.2,206.5 1032.7,209.9 1033.2,209.7 1033.7,206.5 1034.2,207.6 1034.7,209.3 1035.2,206.9 1035.7,207.0 1036.2,210.9 1036.7,212.2 1037.2,208.2 1037.7,208.8 1038.2,208.0 1038.7,206.2 1039.2,211.3 1039.7,206.7 1040.2,210.5 1040.7,208.1 1041.2,205.2 1041.7,204.8 1042.2,205.9 1042.7,206.8 1043.2,207.4 1043.7,207.3 1044.2,206.3 1044.7,207.8 1045.2,206.4 1045.7,205.9 1046.2,205.7 1046.7,204.4 1047.2,205.7 1047.7,204.3 1048.2,208.4 1048.7,209.1 1049.2,209.0 1049.7,208.0 1050.2,205.3 1050.7,209.8 1051.2,209.5 1051.7,207.5 1052.2,215.1 1052.7,211.0 1053.2,208.5 1053.7,208.0 1054.2,208.4 1054.7,210.1 1055.2,206.4 1055.7,207.2 1056.2,209.0 1056.7,204.2 1057.2,209.1 1057.7,210.6 1058.2,211.4 1058.7,211.7 1059.2,210.4 1059.7,215.0 1060.2,209.5 1060.7,206.1 1061.2,209.2 1061.7,205.5 1062.2,205.0 1062.7,206.0 1063.2,205.8 1063.7,211.0 1064.2,206.8 1064.7,208.3 1065.2,205.7 1065.7,206.4 1066.2,212.1 1066.7,205.5 1067.2,209.8 1067.7,204.5 1068.2,208.1 1068.7,204.3 1069.2,202.2 1069.7,204.8 1070.2,204.1 1070.7,202.1 1071.2,202.7 1071.7,203.3 1072.2,198.6 1072.7,201.2 1073.2,203.1 1073.7,198.5 1074.2,206.0 1074.7,201.5 1075.2,203.6 1075.7,202.2 1076.2,202.5 1076.7,204.7 1077.2,203.7 1077.7,207.9 1078.2,207.4 1078.7,204.1 1079.2,205.8 1079.7,204.4 1080.2,202.9 1080.7,197.8 1081.2,198.9 1081.7,198.7 1082.2,202.1 1082.7,198.2 1083.2,199.9 1083.7,194.5 1084.2,192.5 1084.7,194.2 1085.2,186.1 1085.7,179.4 1086.2,174.3 1086.7,171.0 1087.2,164.0 1087.7,160.7 1088.2,157.1 1088.7,154.8 1089.2,152.7 1089.7,149.9 1090.2,149.5 1090.7,146.2 1091.2,143.4 1091.7,143.5 1092.2,146.3 1092.7,146.5 1093.2,142.4 1093.7,144.2 1094.2,145.6 1094.7,143.8 1095.2,148.1 1095.7,150.1 1096.2,145.8 1096.7,147.9 1097.2,143.1 1097.7,143.7 1098.2,145.1 1098.7,143.0 1099.2,141.9 1099.7,142.8 1100.2,140.2 1100.7,141.8 1101.2,140.8 1101.7,140.3 1102.2,142.4 1102.7,147.3 1103.2,146.2 1103.7,150.4 1104.2,150.2 1104.7,152.6 1105.2,149.8 1105.7,156.3 1106.2,156.9 1106.7,159.4 1107.2,159.8 1107.7,161.8 1108.2,160.3 1108.7,157.3 1109.2,159.8 1109.7,158.1 1110.2,155.9 1110.7,154.8 1111.2,154.6 1111.7,150.8 1112.2,145.7 1112.7,148.2 1113.2,145.1 1113.7,141.9 1114.2,142.8 1114.7,145.1 1115.2,145.2 1115.7,147.0 1116.2,148.3 1116.7,148.3 1117.2,146.7 1117.7,144.7 1118.2,148.3 1118.7,148.5 1119.2,148.5 1119.7,148.7 1120.2,147.4 1120.7,148.5 1121.2,146.1 1121.7,151.5 1122.2,146.9 1122.7,151.1 1123.2,157.6 1123.7,158.0 1124.2,164.9 1124.7,172.9 1125.2,173.9 1125.7,175.2 1126.2,178.6 1126.7,177.5 1127.2,176.4 1127.7,174.3 1128.2,171.1 1128.7,166.7 1129.2,162.6 1129.7,157.1 1130.2,156.1 1130.7,147.2 1131.2,143.2 1131.7,146.0 1132.2,145.4 1132.7,140.2 1133.2,147.1 1133.7,142.5 1134.2,138.9 1134.7,145.1 1135.2,141.9 1135.7,140.2 1136.2,144.8 1136.7,143.8 1137.2,143.6 1137.7,146.0 1138.2,144.3 1138.7,143.9 1139.2,144.1 1139.7,146.0 1140.2,145.7 1140.7,147.3 1141.2,147.9 1141.7,149.0 1142.2,152.0 1142.7,156.1 1143.2,158.8 1143.7,158.7 1144.2,165.0 1144.7,168.0 1145.2,172.4 1145.7,165.7 1146.2,164.9 1146.7,160.8 1147.2,161.8 1147.7,158.5 1148.2,153.9 1148.7,154.7 1149.2,145.8 1149.7,144.2 1150.2,145.7 1150.7,142.8 1151.2,142.8 1151.7,148.2 1152.2,146.6 1152.7,145.5 1153.2,144.4 1153.7,144.6 1154.2,145.9 1154.7,142.0 1155.2,143.8 1155.7,146.7 1156.2,144.9 1156.7,139.4 1157.2,142.1 1157.7,141.5 1158.2,145.5 1158.7,148.9 1159.2,147.7 1159.7,152.8 1160.2,153.1 1160.7,156.0 1161.2,159.6 1161.7,166.4 1162.2,169.3 1162.7,172.2 1163.2,175.5 1163.7,176.2 1164.2,176.8 1164.7,176.4 1165.2,171.9 1165.7,169.1 1166.2,165.5 1166.7,159.6 1167.2,153.7 1167.7,149.9 1168.2,146.8 1168.7,146.4 1169.2,145.4 1169.7,145.2 1170.2,146.3 1170.7,143.4 1171.2,142.5 1171.7,144.7 1172.2,147.1 1172.7,146.1 1173.2,148.9 1173.7,149.0 1174.2,145.9 1174.7,149.0 1175.2,146.9 1175.7,148.7 1176.2,150.3 1176.7,147.3 1177.2,143.7 1177.7,147.7 1178.2,150.3 1178.7,151.4 1179.2,152.2 1179.7,156.7 1180.2,162.3 1180.7,164.9 1181.2,169.7 1181.7,173.2 1182.2,173.1 1182.7,172.7 1183.2,173.1 1183.7,170.3 1184.2,169.9 1184.7,162.6 1185.2,156.2 1185.7,152.9 1186.2,147.3 1186.7,144.1 1187.2,141.7 1187.7,143.4 1188.2,139.5 1188.7,141.2 1189.2,144.3 1189.7,143.1 1190.2,139.2 1190.7,144.8 1191.2,143.8 1191.7,144.1 1192.2,145.8 1192.7,146.6 1193.2,143.5 1193.7,143.4 1194.2,142.0 1194.7,142.9 1195.2,144.3 1195.7,143.2 1196.2,145.0 1196.7,147.4 1197.2,151.7 1197.7,157.0 1198.2,160.7 1198.7,170.0 1199.2,174.2 1199.7,178.8 1200.2,184.5 1200.7,183.4 1201.2,184.8 1201.7,180.0 1202.2,174.8 1202.7,171.8 1203.2,166.5 1203.7,161.0 1204.2,156.5 1204.7,147.5 1205.2,147.3 1205.7,146.2 1206.2,148.3 1206.7,146.2 1207.2,149.5 1207.7,144.8 1208.2,144.7 1208.7,150.3 1209.2,147.8 1209.7,147.6 1210.2,151.7 1210.7,151.5 1211.2,149.2 1211.7,147.7 1212.2,147.9 1212.7,144.6 1213.2,143.3 1213.7,142.1 1214.2,143.4 1214.7,143.7 1215.2,147.6 1215.7,155.3 1216.2,157.3 1216.7,162.4 1217.2,166.4 1217.7,170.2 1218.2,175.1 1218.7,177.6 1219.2,182.6 1219.7,181.4 1220.2,177.5 1220.7,175.3 1221.2,170.8 1221.7,165.2 1222.2,161.0 1222.7,154.2 1223.2,151.0 1223.7,150.6 1224.2,150.0 1224.7,148.1 1225.2,152.3 1225.7,148.0 1226.2,145.9 1226.7,148.9 1227.2,145.8 1227.7,146.2 1228.2,148.0 1228.7,145.2 1229.2,145.1 1229.7,144.5 1230.2,144.7 1230.7,146.0 1231.2,146.5 1231.7,144.8 1232.2,145.1 1232.7,144.9 1233.2,146.7 1233.7,150.5 1234.2,154.5 1234.7,156.5 1235.2,162.0 1235.7,167.2 1236.2,169.9 1236.7,175.2 1237.2,175.9 1237.7,177.7 1238.2,178.9 1238.7,173.5 1239.2,174.9 1239.7,170.2 1240.2,167.8 1240.7,161.0 1241.2,160.8 1241.7,151.0 1242.2,145.5 1242.7,142.1 1243.2,138.8 1243.7,142.3 1244.2,140.9 1244.7,142.6 1245.2,142.5 1245.7,144.5 1246.2,144.9 1246.7,144.6 1247.2,146.9 1247.7,141.7 1248.2,145.6 1248.7,143.2 1249.2,140.1 1249.7,144.6 1250.2,144.7 1250.7,143.0 1251.2,144.9 1251.7,145.8 1252.2,145.4 1252.7,145.9 1253.2,147.7 1253.7,153.5 1254.2,153.0 1254.7,158.2 1255.2,163.7 1255.7,166.3 1256.2,168.4 1256.7,166.4 1257.2,169.8 1257.7,165.0 1258.2,163.1 1258.7,159.5 1259.2,153.8 1259.7,149.2 1260.2,148.7 1260.7,146.8 1261.2,141.6 1261.7,141.8 1262.2,141.6 1262.7,138.6 1263.2,140.2 1263.7,142.6 1264.2,139.0 1264.7,143.6 1265.2,143.8 1265.7,145.0 1266.2,142.8 1266.7,145.9 1267.2,141.0 1267.7,143.9 1268.2,147.4 1268.7,147.3 1269.2,146.5 1269.7,141.9 1270.2,145.2 1270.7,146.3 1271.2,149.0 1271.7,152.9 1272.2,158.4 1272.7,160.7 1273.2,167.0 1273.7,168.5 1274.2,171.8 1274.7,173.8 1275.2,176.0 1275.7,174.7 1276.2,169.8 1276.7,167.4 1277.2,160.3 1277.7,158.2 1278.2,155.9 1278.7,152.4 1279.2,148.9 1279.7,146.2 1280.2,143.4 1280.7,140.7 1281.2,141.1 1281.7,141.4 1282.2,137.8 1282.7,144.3 1283.2,143.2 1283.7,139.4 1284.2,147.4 1284.7,144.0 1285.2,142.9 1285.7,142.8 1286.2,142.6 1286.7,143.2 1287.2,143.5 1287.7,144.8 1288.2,143.8 1288.7,148.8 1289.2,147.6 1289.7,147.1 1290.2,151.3 1290.7,153.2 1291.2,153.1 1291.7,158.3 1292.2,158.9 1292.7,161.7 1293.2,165.3 1293.7,165.8 1294.2,166.1 1294.7,166.6 1295.2,161.4 1295.7,157.2 1296.2,156.1 1296.7,151.4 1297.2,146.0 1297.7,146.6 1298.2,142.3 1298.7,140.4 1299.2,143.7 1299.7,142.2 1300.2,142.1 1300.7,140.2 1301.2,142.9 1301.7,142.3 1302.2,146.3 1302.7,143.9 1303.2,143.3 1303.7,146.8 1304.2,140.8 1304.7,142.6 1305.2,146.4 1305.7,141.7 1306.2,144.4 1306.7,143.7 1307.2,143.2 1307.7,147.2 1308.2,147.0 1308.7,148.4 1309.2,156.6 1309.7,160.6 1310.2,163.2 1310.7,165.6 1311.2,165.6 1311.7,164.5 1312.2,168.4 1312.7,168.9 1313.2,164.4 1313.7,166.5 1314.2,163.5 1314.7,158.4 1315.2,154.6 1315.7,153.3 1316.2,150.8 1316.7,146.3 1317.2,145.8 1317.7,147.5 1318.2,145.3 1318.7,145.6 1319.2,144.2 1319.7,144.5 1320.2,143.5 1320.7,144.0 1321.2,141.3 1321.7,142.1 1322.2,145.3 1322.7,143.0 1323.2,144.6 1323.7,143.3 1324.2,142.5 1324.7,141.9 1325.2,146.4 1325.7,145.8 1326.2,146.8 1326.7,150.9 1327.2,151.8 1327.7,158.1 1328.2,160.7 1328.7,167.4 1329.2,172.4 1329.7,171.4 1330.2,174.3 1330.7,176.4 1331.2,173.6 1331.7,176.1 1332.2,175.5 1332.7,171.9 1333.2,172.1 1333.7,167.4 1334.2,163.1 1334.7,159.4 1335.2,158.3 1335.7,153.6 1336.2,153.0 1336.7,147.3 1337.2,144.3 1337.7,147.0 1338.2,141.4 1338.7,145.7 1339.2,145.0 1339.7,146.2 1340.2,144.8 1340.7,148.0 1341.2,147.9 1341.7,141.4 1342.2,142.1 1342.7,143.7 1343.2,142.2 1343.7,148.7 1344.2,149.6 1344.7,152.0 1345.2,155.9 1345.7,159.2 1346.2,166.0 1346.7,166.4 1347.2,171.6 1347.7,163.8 1348.2,167.2 1348.7,166.2 1349.2,165.9 1349.7,170.7 1350.2,170.9 1350.7,169.6 1351.2,168.2 1351.7,165.4 1352.2,161.3 1352.7,159.6 1353.2,156.8 1353.7,154.8 1354.2,150.4 1354.7,149.5 1355.2,149.5 1355.7,145.7 1356.2,145.6 1356.7,146.6 1357.2,141.1 1357.7,142.9 1358.2,146.2 1358.7,141.7 1359.2,143.2 1359.7,145.4 1360.2,140.2 1360.7,143.6 1361.2,145.0 1361.7,147.0 1362.2,149.0 1362.7,152.5 1363.2,149.7 1363.7,153.5 1364.2,155.4 1364.7,156.6 1365.2,159.1 1365.7,161.4 1366.2,165.0 1366.7,164.9 1367.2,167.5 1367.7,164.3 1368.2,162.6 1368.7,160.6 1369.2,162.9 1369.7,160.4 1370.2,155.1 1370.7,156.5 1371.2,151.7 1371.7,148.9 1372.2,149.6 1372.7,145.7 1373.2,146.8 1373.7,142.3 1374.2,139.4 1374.7,138.2 1375.2,136.4 1375.7,134.6 1376.2,140.7 1376.7,139.8 1377.2,137.6 1377.7,140.2 1378.2,137.1 1378.7,138.6 1379.2,140.1 1379.7,140.8 1380.2,145.6 1380.7,143.3 1381.2,148.9 1381.7,148.1 1382.2,149.5 1382.7,151.3 1383.2,151.1 1383.7,153.6 1384.2,156.1 1384.7,155.9 1385.2,155.3 1385.7,159.1 1386.2,159.9 1386.7,157.3 1387.2,157.5 1387.7,160.3 1388.2,153.2 1388.7,153.4 1389.2,158.0 1389.7,151.6 1390.2,149.1 1390.7,147.2 1391.2,146.1 1391.7,145.2 1392.2,145.0 1392.7,142.0 1393.2,139.7 1393.7,143.6 1394.2,142.5 1394.7,140.5 1395.2,142.7 1395.7,139.6 1396.2,140.3 1396.7,139.1 1397.2,141.1 1397.7,141.8 1398.2,141.4 1398.7,141.3 1399.2,142.7 1399.7,141.8 1400.2,143.2 1400.7,145.5 1401.2,149.4 1401.7,154.6 1402.2,156.0 1402.7,160.3 1403.2,153.9 1403.7,160.9 1404.2,160.0 1404.7,159.7 1405.2,163.9 1405.7,160.0 1406.2,159.5 1406.7,162.3 1407.2,156.5 1407.7,154.0 1408.2,157.0 1408.7,150.3 1409.2,149.1 1409.7,147.4 1410.2,145.7 1410.7,143.8 1411.2,145.0 1411.7,143.1 1412.2,144.7 1412.7,141.3 1413.2,143.4 1413.7,142.0 1414.2,140.2 1414.7,143.7 1415.2,144.6 1415.7,145.3 1416.2,144.1 1416.7,142.4 1417.2,142.3 1417.7,143.6 1418.2,145.2 1418.7,147.9 1419.2,146.8 1419.7,151.4 1420.2,152.9 1420.7,152.4 1421.2,155.5 1421.7,156.6 1422.2,157.4 1422.7,158.0 1423.2,156.7 1423.7,157.4 1424.2,160.2 1424.7,156.3 1425.2,156.4 1425.7,157.5 1426.2,152.9 1426.7,152.8 1427.2,151.9 1427.7,148.7 1428.2,147.9 1428.7,148.8 1429.2,146.1 1429.7,146.4 1430.2,141.3 1430.7,145.6 1431.2,141.1 1431.7,146.0 1432.2,143.8 1432.7,142.2 1433.2,150.1 1433.7,146.0 1434.2,143.1 1434.7,144.6 1435.2,147.2 1435.7,143.4 1436.2,150.1 1436.7,153.2 1437.2,151.0 1437.7,156.8 1438.2,152.9 1438.7,157.9 1439.2,159.4 1439.7,161.0 1440.2,164.0 1440.7,166.9 1441.2,167.8 1441.7,162.7 1442.2,163.9 1442.7,165.7 1443.2,163.8 1443.7,164.0 1444.2,162.2 1444.7,164.3 1445.2,157.7 1445.7,155.6 1446.2,154.3 1446.7,152.2 1447.2,153.6 1447.7,147.4 1448.2,145.8 1448.7,142.2 1449.2,147.0 1449.7,145.3 1450.2,143.5 1450.7,142.8 1451.2,145.0 1451.7,143.0 1452.2,146.2 1452.7,144.8 1453.2,147.4 1453.7,145.8 1454.2,147.5 1454.7,149.4 1455.2,145.6 1455.7,147.9 1456.2,151.1 1456.7,151.1 1457.2,151.1 1457.7,155.3 1458.2,154.8 1458.7,156.3 1459.2,156.7 1459.7,158.5 1460.2,161.0 1460.7,155.4 1461.2,157.1 1461.7,157.6 1462.2,157.9 1462.7,156.5 1463.2,156.8 1463.7,156.3 1464.2,154.6 1464.7,151.9 1465.2,150.9 1465.7,149.4 1466.2,145.6 1466.7,147.2 1467.2,141.9 1467.7,143.7 1468.2,141.2 1468.7,139.8 1469.2,142.1 1469.7,144.7 1470.2,143.6 1470.7,143.4 1471.2,146.4 1471.7,144.1 1472.2,142.9 1472.7,144.4 1473.2,144.1 1473.7,144.6 1474.2,147.3 1474.7,149.8 1475.2,153.2 1475.7,157.3 1476.2,159.0 1476.7,162.6 1477.2,164.4 1477.7,165.5 1478.2,169.2 1478.7,166.9 1479.2,166.1 1479.7,167.3 1480.2,163.3 1480.7,163.3 1481.2,163.3 1481.7,159.7 1482.2,164.8 1482.7,155.9 1483.2,157.5 1483.7,150.3 1484.2,146.3 1484.7,153.3 1485.2,146.1 1485.7,145.8 1486.2,145.6 1486.7,143.4 1487.2,147.0 1487.7,141.7 1488.2,142.5 1488.7,143.5 1489.2,144.2 1489.7,142.6 1490.2,146.3 1490.7,145.5 1491.2,147.2 1491.7,149.6 1492.2,146.8 1492.7,147.8 1493.2,148.2 1493.7,152.3 1494.2,151.3 1494.7,150.5 1495.2,153.5 1495.7,154.7 1496.2,155.0 1496.7,159.9 1497.2,160.5 1497.7,155.1 1498.2,155.1 1498.7,157.0 1499.2,156.5 1499.7,158.6 1500.2,158.4 1500.7,155.1 1501.2,154.9 1501.7,152.6 1502.2,149.3 1502.7,143.0 1503.2,144.0 1503.7,148.1 1504.2,145.8 1504.7,143.3 1505.2,145.0 1505.7,140.6 1506.2,143.6 1506.7,144.7 1507.2,140.8 1507.7,144.4 1508.2,142.8 1508.7,144.1 1509.2,146.5 1509.7,148.1 1510.2,152.0 1510.7,155.4 1511.2,156.7 1511.7,156.2 1512.2,156.7 1512.7,157.6 1513.2,160.4 1513.7,162.6 1514.2,167.0 1514.7,170.0 1515.2,170.3 1515.7,172.2 1516.2,168.6 1516.7,167.6 1517.2,166.6 1517.7,166.8 1518.2,164.8 1518.7,161.0 1519.2,160.7 1519.7,156.6 1520.2,155.4 1520.7,154.2 1521.2,151.2 1521.7,153.1 1522.2,149.5 1522.7,147.1 1523.2,145.3 1523.7,140.5 1524.2,140.0 1524.7,142.7 1525.2,141.2 1525.7,141.7 1526.2,143.4 1526.7,143.1 1527.2,146.5 1527.7,145.3 1528.2,144.8 1528.7,145.2 1529.2,149.8 1529.7,153.4 1530.2,152.9 1530.7,155.4 1531.2,157.1 1531.7,153.8 1532.2,158.6 1532.7,158.7 1533.2,157.6 1533.7,161.2 1534.2,162.7 1534.7,164.0 1535.2,161.3 1535.7,159.4 1536.2,160.5 1536.7,159.0 1537.2,159.4 1537.7,156.2 1538.2,156.4 1538.7,153.3 1539.2,150.1 1539.7,152.9 1540.2,148.4 1540.7,145.6 1541.2,144.1 1541.7,141.8 1542.2,139.1 1542.7,138.6 1543.2,140.3 1543.7,141.0 1544.2,143.8 1544.7,138.9 1545.2,142.7 1545.7,144.0 1546.2,146.1 1546.7,144.8 1547.2,147.7 1547.7,147.2 1548.2,149.7 1548.7,152.2 1549.2,155.1 1549.7,160.8 1550.2,160.1 1550.7,167.0 1551.2,171.1 1551.7,170.0 1552.2,172.0 1552.7,173.6 1553.2,172.7 1553.7,170.6 1554.2,171.7 1554.7,168.5 1555.2,164.7 1555.7,164.9 1556.2,164.3 1556.7,160.8 1557.2,158.7 1557.7,157.6 1558.2,154.0 1558.7,153.9 1559.2,154.4 1559.7,148.2 1560.2,146.0 1560.7,141.8 1561.2,144.6 1561.7,144.0 1562.2,142.4 1562.7,149.8 1563.2,150.4 1563.7,149.8 1564.2,150.6 1564.7,149.5 1565.2,146.3 1565.7,147.4 1566.2,149.2 1566.7,147.7 1567.2,144.3 1567.7,146.9 1568.2,146.5 1568.7,147.2 1569.2,148.8 1569.7,151.8 1570.2,156.0 1570.7,159.3 1571.2,161.3 1571.7,159.8 1572.2,161.4 1572.7,163.7 1573.2,161.2 1573.7,160.3 1574.2,158.4 1574.7,157.3 1575.2,154.5 1575.7,149.7 1576.2,149.6 1576.7,142.7 1577.2,143.2 1577.7,147.1 1578.2,141.6 1578.7,142.6 1579.2,145.6 1579.7,140.1 1580.2,142.4 1580.7,141.0 1581.2,146.6 1581.7,143.3 1582.2,143.1 1582.7,144.7 1583.2,145.8 1583.7,145.7 1584.2,150.1 1584.7,149.2 1585.2,148.3 1585.7,146.6 1586.2,147.5 1586.7,148.1 1587.2,151.2 1587.7,153.8 1588.2,157.1 1588.7,159.0 1589.2,159.5 1589.7,161.1 1590.2,163.9 1590.7,164.1 1591.2,159.8 1591.7,162.2 1592.2,157.1 1592.7,154.8 1593.2,153.7 1593.7,148.9 1594.2,150.5 1594.7,144.4 1595.2,145.3 1595.7,146.3 1596.2,142.6 1596.7,145.2 1597.2,141.5 1597.7,145.2 1598.2,143.9 1598.7,143.6 1599.2,144.1 1599.7,143.1 1600.2,144.2 1600.7,144.1 1601.2,144.6 1601.7,144.3 1602.2,149.6 1602.7,142.5 1603.2,144.5 1603.7,146.2 1604.2,143.8 1604.7,143.6 1605.2,145.3 1605.7,150.0 1606.2,149.2 1606.7,155.4 1607.2,155.5 1607.7,164.1 1608.2,164.3 1608.7,166.7 1609.2,166.6 1609.7,161.5 1610.2,161.1 1610.7,159.3 1611.2,158.5 1611.7,158.0 1612.2,156.2 1612.7,150.2 1613.2,147.2 1613.7,145.4 1614.2,142.0 1614.7,142.7 1615.2,143.6 1615.7,142.3 1616.2,142.2 1616.7,142.1 1617.2,142.5 1617.7,141.8 1618.2,144.5 1618.7,144.4 1619.2,140.6 1619.7,143.5 1620.2,142.3 1620.7,147.7 1621.2,145.2 1621.7,144.0 1622.2,145.2 1622.7,142.4 1623.2,142.3 1623.7,145.5 1624.2,148.1 1624.7,155.2 1625.2,158.8 1625.7,159.8 1626.2,162.1 1626.7,165.6 1627.2,168.8 1627.7,165.8 1628.2,165.3 1628.7,163.8 1629.2,163.2 1629.7,159.8 1630.2,155.5 1630.7,153.9 1631.2,152.0 1631.7,144.6 1632.2,143.2 1632.7,143.2 1633.2,142.0 1633.7,144.2 1634.2,142.0 1634.7,142.4 1635.2,139.7 1635.7,137.6 1636.2,140.6 1636.7,137.0 1637.2,137.9 1637.7,140.0 1638.2,140.9 1638.7,140.5 1639.2,144.0 1639.7,142.8 1640.2,143.7 1640.7,140.6 1641.2,140.3 1641.7,143.4 1642.2,146.9 1642.7,150.0 1643.2,152.9 1643.7,159.3 1644.2,159.0 1644.7,165.3 1645.2,167.7 1645.7,167.2 1646.2,168.1 1646.7,164.1 1647.2,162.3 1647.7,164.3 1648.2,158.4 1648.7,156.4 1649.2,156.2 1649.7,153.8 1650.2,149.7 1650.7,148.7 1651.2,145.9 1651.7,147.8 1652.2,149.2 1652.7,145.6 1653.2,148.6 1653.7,144.9 1654.2,148.7 1654.7,146.3 1655.2,145.4 1655.7,144.0 1656.2,141.0 1656.7,143.5 1657.2,144.8 1657.7,146.0 1658.2,149.3 1658.7,146.6 1659.2,146.8 1659.7,147.8 1660.2,147.0 1660.7,152.4 1661.2,154.1 1661.7,156.4 1662.2,160.5 1662.7,159.7 1663.2,164.2 1663.7,169.0 1664.2,171.4 1664.7,173.4 1665.2,166.5 1665.7,162.4 1666.2,161.0 1666.7,157.1 1667.2,152.4 1667.7,149.5 1668.2,149.8 1668.7,144.8 1669.2,144.7 1669.7,147.1 1670.2,143.8 1670.7,145.6 1671.2,144.2 1671.7,142.4 1672.2,144.7 1672.7,144.3 1673.2,139.3 1673.7,140.7 1674.2,138.1 1674.7,141.4 1675.2,137.5 1675.7,136.7 1676.2,138.3 1676.7,141.9 1677.2,140.5 1677.7,141.1 1678.2,140.8 1678.7,142.2 1679.2,146.7 1679.7,151.4 1680.2,151.4 1680.7,156.6 1681.2,158.3 1681.7,163.3 1682.2,164.5 1682.7,167.1 1683.2,171.1 1683.7,169.0 1684.2,164.9 1684.7,165.5 1685.2,160.0 1685.7,156.3 1686.2,153.9 1686.7,151.9 1687.2,151.3 1687.7,146.3 1688.2,142.7 1688.7,141.4 1689.2,138.3 1689.7,145.7 1690.2,143.0 1690.7,144.1 1691.2,148.2 1691.7,146.1 1692.2,143.9 1692.7,145.4 1693.2,144.3 1693.7,143.8 1694.2,146.2 1694.7,143.6 1695.2,145.8 1695.7,145.0 1696.2,142.1 1696.7,144.1 1697.2,143.4 1697.7,142.8 1698.2,148.3 1698.7,150.4 1699.2,152.8 1699.7,157.2 1700.2,158.0 1700.7,164.5 1701.2,161.3 1701.7,164.5 1702.2,163.0 1702.7,157.3 1703.2,158.9 1703.7,152.8 1704.2,151.6 1704.7,146.8 1705.2,148.0 1705.7,142.0 1706.2,138.9 1706.7,140.7 1707.2,140.5 1707.7,137.4 1708.2,141.8 1708.7,142.5 1709.2,142.4 1709.7,139.3 1710.2,140.0 1710.7,140.1 1711.2,137.2 1711.7,141.8 1712.2,139.8 1712.7,137.5 1713.2,142.7 1713.7,140.1 1714.2,140.5 1714.7,147.2 1715.2,145.8 1715.7,148.1 1716.2,153.3 1716.7,156.8 1717.2,164.6 1717.7,171.7 1718.2,180.1 1718.7,189.9 1719.2,196.2 1719.7,201.8 1720.2,205.3 1720.7,211.0 1721.2,214.8 1721.7,217.4 1722.2,218.5 1722.7,220.1 1723.2,220.1 1723.7,220.8 1724.2,220.7 1724.7,223.1 1725.2,218.6 1725.7,221.5 1726.2,218.6 1726.7,214.2 1727.2,219.2 1727.7,222.5 1728.2,219.6 1728.7,221.0 1729.2,220.8 1729.7,218.1 1730.2,215.9 1730.7,217.7 1731.2,217.5 1731.7,218.4 1732.2,218.5 1732.7,215.5 1733.2,219.2 1733.7,219.2 1734.2,221.0 1734.7,218.1 1735.2,210.9 1735.7,218.6 1736.2,216.3 1736.7,217.0 1737.2,218.6 1737.7,217.4 1738.2,219.5 1738.7,217.3 1739.2,213.6 1739.7,219.0 1740.2,215.8 1740.7,219.6 1741.2,217.0 1741.7,215.6 1742.2,214.3 1742.7,219.1 1743.2,215.3 1743.7,216.8 1744.2,219.5 1744.7,217.2 1745.2,221.8 1745.7,221.1 1746.2,220.1 1746.7,225.5 1747.2,219.7 1747.7,220.4 1748.2,220.7 1748.7,217.0 1749.2,215.8 1749.7,219.3 1750.2,215.2 1750.7,219.7 1751.2,218.3 1751.7,213.6 1752.2,216.0 1752.7,215.3 1753.2,218.3 1753.7,215.2 1754.2,215.8 1754.7,215.9 1755.2,218.2 1755.7,217.7 1756.2,221.3 1756.7,223.8 1757.2,226.6 1757.7,224.0 1758.2,230.1 1758.7,232.9 1759.2,231.9 1759.7,229.1 1760.2,228.6 1760.7,225.1 1761.2,223.5 1761.7,221.5 1762.2,220.5 1762.7,218.0 1763.2,218.5 1763.7,218.9 1764.2,219.2 1764.7,219.8 1765.2,223.3 1765.7,220.2 1766.2,220.7 1766.7,217.9 1767.2,222.3 1767.7,218.9 1768.2,218.0 1768.7,217.1 1769.2,215.9 1769.7,220.3 1770.2,216.7 1770.7,220.8 1771.2,219.8 1771.7,213.6 1772.2,215.3 1772.7,216.5 1773.2,216.6 1773.7,216.6 1774.2,218.7 1774.7,214.3 1775.2,219.6 1775.7,219.6 1776.2,222.5 1776.7,227.6 1777.2,227.0 1777.7,223.1 1778.2,224.7 1778.7,223.8 1779.2,220.8 1779.7,220.2 1780.2,217.9 1780.7,216.5 1781.2,215.0 1781.7,211.6 1782.2,213.7 1782.7,210.1 1783.2,211.6 1783.7,213.0 1784.2,215.5 1784.7,218.3 1785.2,218.5 1785.7,219.5 1786.2,219.0 1786.7,217.0 1787.2,218.2 1787.7,215.7 1788.2,214.5 1788.7,205.6 1789.2,197.9 1789.7,191.9 1790.2,186.0 1790.7,186.0 1791.2,185.6 1791.7,184.8 1792.2,180.6 1792.7,181.8 1793.2,178.2 1793.7,182.7 1794.2,182.8 1794.7,181.3 1795.2,184.1 1795.7,183.4 1796.2,183.7 1796.7,182.9 1797.2,180.6 1797.7,182.1 1798.2,182.6 1798.7,185.5 1799.2,185.8 1799.7,186.7 1800.2,183.6 1800.7,186.1 1801.2,183.8 1801.7,183.0 1802.2,183.8 1802.7,187.8 1803.2,185.9 1803.7,188.0 1804.2,186.8 1804.7,187.4 1805.2,184.4 1805.7,184.9 1806.2,187.0 1806.7,186.4 1807.2,185.9 1807.7,183.7 1808.2,187.3 1808.7,189.1 1809.2,189.2 1809.7,187.2 1810.2,185.2 1810.7,185.6 1811.2,190.2 1811.7,190.1 1812.2,190.3 1812.7,191.0 1813.2,187.9 1813.7,191.5 1814.2,188.5 1814.7,192.7 1815.2,190.9 1815.7,188.6 1816.2,190.7 1816.7,188.3 1817.2,189.2 1817.7,191.8 1818.2,188.2 1818.7,188.1 1819.2,191.3 1819.7,187.3 1820.2,190.3 1820.7,190.6"/>
<path d="M1401.2 44.1V266.6" stroke="#e8e84a" stroke-width="1.2"/>
<rect x="980.7" y="44.1" width="840.0" height="222.5" fill="none" stroke="#8c8c8c" stroke-width="1.6"/>
<text x="966.3" y="50.1" text-anchor="end" font-size="20" fill="#fff" font-family="Liberation Sans, Arial, sans-serif">40.0</text>
<text x="966.3" y="94.6" text-anchor="end" font-size="20" fill="#fff" font-family="Liberation Sans, Arial, sans-serif">20.0</text>
<text x="966.3" y="139.1" text-anchor="end" font-size="20" fill="#fff" font-family="Liberation Sans, Arial, sans-serif">0.0</text>
<text x="966.3" y="183.6" text-anchor="end" font-size="20" fill="#fff" font-family="Liberation Sans, Arial, sans-serif">-20.0</text>
<text x="966.3" y="228.1" text-anchor="end" font-size="20" fill="#fff" font-family="Liberation Sans, Arial, sans-serif">-40.0</text>
<text x="966.3" y="272.6" text-anchor="end" font-size="20" fill="#fff" font-family="Liberation Sans, Arial, sans-serif">-60.0</text>
<text x="1056.3" y="290.8" text-anchor="middle" font-size="20" fill="#fff" font-family="Liberation Sans, Arial, sans-serif">217.8</text>
<text x="1138.5" y="290.8" text-anchor="middle" font-size="20" fill="#fff" font-family="Liberation Sans, Arial, sans-serif">218</text>
<text x="1220.7" y="290.8" text-anchor="middle" font-size="20" fill="#fff" font-family="Liberation Sans, Arial, sans-serif">218.2</text>
<text x="1302.9" y="290.8" text-anchor="middle" font-size="20" fill="#fff" font-family="Liberation Sans, Arial, sans-serif">218.4</text>
<text x="1385.1" y="290.8" text-anchor="middle" font-size="20" fill="#fff" font-family="Liberation Sans, Arial, sans-serif">218.6</text>
<text x="1467.3" y="290.8" text-anchor="middle" font-size="20" fill="#fff" font-family="Liberation Sans, Arial, sans-serif">218.8</text>
<text x="1549.5" y="290.8" text-anchor="middle" font-size="20" fill="#fff" font-family="Liberation Sans, Arial, sans-serif">219</text>
<text x="1631.7" y="290.8" text-anchor="middle" font-size="20" fill="#fff" font-family="Liberation Sans, Arial, sans-serif">219.2</text>
<text x="1713.9" y="290.8" text-anchor="middle" font-size="20" fill="#fff" font-family="Liberation Sans, Arial, sans-serif">219.4</text>
<text x="1796.1" y="290.8" text-anchor="middle" font-size="20" fill="#fff" font-family="Liberation Sans, Arial, sans-serif">219.6</text>
<text x="1401" y="323" text-anchor="middle" font-size="23.5" fill="#fff" font-family="Liberation Sans, Arial, sans-serif">Frequency (MHz)</text>
<text transform="translate(884.2 156) rotate(-90)" text-anchor="middle" font-size="23.8" fill="#fff" font-family="Liberation Sans, Arial, sans-serif">Magnitude (dB)</text>
<rect x="1372.2" y="468.0" width="77.8" height="340.6" fill="#404040"/>
<path d="M1392.7 468.0V808.6M1420.8 468.0V808.6M1448.8 468.0V808.6M1476.9 468.0V808.6M1505.0 468.0V808.6M1533.0 468.0V808.6M1561.1 468.0V808.6M1589.2 468.0V808.6M1617.3 468.0V808.6M1645.3 468.0V808.6M1673.4 468.0V808.6M1701.5 468.0V808.6M1729.5 468.0V808.6M1757.6 468.0V808.6M1785.7 468.0V808.6M1813.8 468.0V808.6M1841.8 468.0V808.6M1372.2 536.4H1853.0M1372.2 604.8H1853.0M1372.2 673.2H1853.0M1372.2 741.6H1853.0" stroke="#8c8c8c" stroke-width="1.1" fill="none" opacity="0.9"/>
<path d="M1452.6 468.0V810.6" stroke="#e6e650" stroke-width="1.1" stroke-dasharray="1.3 1.5"/>
<polyline fill="none" stroke="#e0e0e0" stroke-width="1.5" stroke-linejoin="miter" points="1372.2,790.9 1373.7,741.6 1375.2,782.2 1376.7,805.2 1378.2,780.0 1379.7,740.9 1381.2,763.0 1382.7,751.4 1384.2,778.2 1385.7,730.5 1387.2,758.2 1388.7,740.0 1390.2,764.1 1391.7,728.6 1393.2,764.9 1394.7,730.2 1396.2,771.0 1397.7,735.8 1399.2,765.9 1400.7,718.5 1402.2,757.3 1403.7,725.6 1405.2,773.7 1406.7,714.2 1408.2,766.4 1409.7,721.9 1411.2,777.5 1412.7,712.1 1414.2,747.6 1415.7,722.1 1417.2,745.6 1418.7,689.7 1420.2,736.3 1421.7,711.9 1423.2,745.0 1424.7,697.2 1426.2,731.8 1427.7,698.0 1429.2,728.5 1430.7,696.6 1432.2,736.7 1433.7,685.6 1435.2,726.1 1436.7,674.4 1438.2,704.6 1439.7,681.6 1441.2,716.4 1442.7,673.4 1444.2,695.4 1445.7,655.5 1447.2,692.7 1448.7,630.6 1450.2,637.0 1451.7,586.5 1453.2,553.5 1454.7,636.7 1456.2,657.3 1457.7,645.3 1459.2,686.7 1460.7,672.3 1462.2,674.4 1463.7,669.6 1465.2,685.2 1466.7,690.5 1468.2,695.9 1469.7,686.5 1471.2,692.0 1472.7,690.1 1474.2,700.9 1475.7,672.3 1477.2,678.2 1478.7,658.5 1480.2,667.0 1481.7,632.2 1483.2,666.8 1484.7,634.0 1486.2,627.1 1487.7,605.1 1489.2,526.8 1490.7,561.3 1492.2,618.2 1493.7,619.4 1495.2,656.8 1496.7,638.0 1498.2,675.1 1499.7,664.5 1501.2,686.2 1502.7,679.3 1504.2,688.0 1505.7,693.6 1507.2,710.5 1508.7,675.8 1510.2,717.5 1511.7,705.2 1513.2,725.1 1514.7,685.0 1516.2,713.2 1517.7,698.3 1519.2,721.1 1520.7,712.2 1522.2,738.0 1523.7,700.2 1525.2,716.3 1526.7,753.9 1528.2,716.4 1529.7,693.5 1531.2,725.2 1532.7,716.2 1534.2,743.4 1535.7,702.5 1537.2,746.3 1538.7,708.6 1540.2,745.0 1541.7,707.2 1543.2,727.5 1544.7,716.9 1546.2,727.1 1547.7,700.7 1549.2,730.6 1550.7,695.2 1552.2,725.9 1553.7,697.5 1555.2,698.6 1556.7,677.5 1558.2,688.6 1559.7,671.4 1561.2,617.5 1562.7,584.3 1564.2,666.8 1565.7,665.8 1567.2,707.6 1568.7,692.1 1570.2,712.4 1571.7,696.2 1573.2,731.8 1574.7,714.7 1576.2,741.8 1577.7,712.2 1579.2,745.9 1580.7,775.8 1582.2,739.1 1583.7,720.3 1585.2,760.3 1586.7,740.2 1588.2,725.4 1589.7,667.7 1591.2,746.3 1592.7,736.2 1594.2,754.3 1595.7,747.1 1597.2,738.1 1598.7,750.8 1600.2,763.4 1601.7,745.9 1603.2,769.5 1604.7,782.6 1606.2,760.2 1607.7,756.3 1609.2,749.2 1610.7,736.0 1612.2,749.7 1613.7,739.6 1615.2,786.1 1616.7,733.3 1618.2,755.4 1619.7,681.5 1621.2,627.4 1622.7,711.2 1624.2,756.7 1625.7,734.3 1627.2,765.7 1628.7,781.3 1630.2,745.1 1631.7,728.4 1633.2,738.5 1634.7,758.7 1636.2,763.8 1637.7,759.5 1639.2,771.6 1640.7,710.1 1642.2,758.1 1643.7,757.5 1645.2,738.9 1646.7,758.7 1648.2,776.0 1649.7,740.8 1651.2,770.6 1652.7,761.9 1654.2,757.5 1655.7,760.5 1657.2,769.7 1658.7,759.2 1660.2,725.1 1661.7,764.2 1663.2,788.1 1664.7,740.0 1666.2,745.4 1667.7,736.1 1669.2,743.8 1670.7,785.7 1672.2,768.0 1673.7,799.7 1675.2,749.0 1676.7,737.8 1678.2,749.4 1679.7,759.4 1681.2,730.0 1682.7,759.0 1684.2,752.6 1685.7,746.7 1687.2,760.9 1688.7,767.6 1690.2,768.2 1691.7,740.8 1693.2,738.3 1694.7,742.3 1696.2,744.3 1697.7,744.6 1699.2,756.4 1700.7,714.2 1702.2,771.1 1703.7,759.2 1705.2,766.7 1706.7,746.2 1708.2,764.6 1709.7,806.6 1711.2,750.9 1712.7,737.5 1714.2,767.7 1715.7,769.7 1717.2,745.1 1718.7,772.1 1720.2,750.3 1721.7,764.7 1723.2,758.2 1724.7,783.2 1726.2,746.7 1727.7,763.8 1729.2,769.4 1730.7,727.7 1732.2,746.8 1733.7,745.0 1735.2,751.2 1736.7,761.8 1738.2,755.4 1739.7,738.2 1741.2,757.3 1742.7,750.7 1744.2,749.8 1745.7,769.8 1747.2,755.3 1748.7,764.1 1750.2,774.6 1751.7,808.1 1753.2,747.8 1754.7,756.1 1756.2,769.9 1757.7,787.9 1759.2,750.4 1760.7,758.6 1762.2,780.9 1763.7,758.2 1765.2,778.7 1766.7,757.7 1768.2,755.4 1769.7,752.4 1771.2,714.2 1772.7,755.1 1774.2,773.5 1775.7,762.9 1777.2,764.7 1778.7,760.9 1780.2,753.8 1781.7,748.9 1783.2,808.1 1784.7,800.9 1786.2,752.0 1787.7,760.5 1789.2,725.8 1790.7,744.6 1792.2,780.9 1793.7,808.1 1795.2,765.1 1796.7,743.9 1798.2,772.7 1799.7,759.3 1801.2,759.7 1802.7,759.3 1804.2,766.1 1805.7,784.8 1807.2,751.5 1808.7,744.0 1810.2,759.0 1811.7,772.3 1813.2,808.1 1814.7,750.2 1816.2,760.6 1817.7,758.3 1819.2,738.4 1820.7,773.9 1822.2,748.4 1823.7,786.6 1825.2,768.1 1826.7,768.7 1828.2,771.8 1829.7,768.1 1831.2,745.0 1832.7,792.9 1834.2,760.0 1835.7,727.6 1837.2,759.3 1838.7,783.0 1840.2,752.9 1841.7,795.0 1843.2,735.6 1844.7,776.0 1846.2,766.7 1847.7,781.1 1849.2,757.3 1850.7,772.9 1852.2,723.1"/>
<rect x="1372.2" y="468.0" width="480.8" height="340.6" fill="none" stroke="#8c8c8c" stroke-width="1.6"/>
<circle cx="1452.6" cy="554.1" r="5.9" fill="#e41414"/>
<circle cx="1489.8" cy="527.1" r="5.9" fill="#ffee20"/>
<circle cx="1562.0" cy="585.1" r="5.9" fill="#1e9edc"/>
<circle cx="1620.9" cy="627.3" r="5.9" fill="#7a2ee0"/>
<rect x="1373.5" y="810.2" width="479.2" height="12.2" fill="#b4b4b4"/>
<rect x="1475.6" y="810.2" width="127" height="12.2" fill="#fa0000" stroke="#c00000" stroke-width="0.8"/>
<rect x="1373.5" y="810.2" width="11.8" height="12.2" fill="#f01010" stroke="#a00000" stroke-width="0.9"/>
<rect x="1386.7" y="810.2" width="11.8" height="12.2" fill="#f01010" stroke="#a00000" stroke-width="0.9"/>
<rect x="1840.4" y="810.2" width="11.8" height="12.2" fill="#f01010" stroke="#a00000" stroke-width="0.9"/>
<rect x="1385.3" y="809.7" width="1.4" height="13.2" fill="#000"/>
<circle cx="1379.4" cy="816.3" r="2.6" fill="none" stroke="#700000" stroke-width="0.9"/><path d="M1378 816.3h2.8" stroke="#700000" stroke-width="0.8"/>
<path d="M1394.6 813.3v6l-4.2-3z" fill="#500000"/>
<path d="M1844.6 813.3v6l4.2-3z" fill="#500000"/>
<text x="1361.2" y="475.2" text-anchor="end" font-size="20" fill="#fff" font-family="Liberation Sans, Arial, sans-serif">-20.0</text>
<text x="1361.2" y="543.6" text-anchor="end" font-size="20" fill="#fff" font-family="Liberation Sans, Arial, sans-serif">-30.0</text>
<text x="1361.2" y="612.0" text-anchor="end" font-size="20" fill="#fff" font-family="Liberation Sans, Arial, sans-serif">-40.0</text>
<text x="1361.2" y="680.4" text-anchor="end" font-size="20" fill="#fff" font-family="Liberation Sans, Arial, sans-serif">-50.0</text>
<text x="1361.2" y="748.8" text-anchor="end" font-size="20" fill="#fff" font-family="Liberation Sans, Arial, sans-serif">-60.0</text>
<text x="1361.2" y="817.2" text-anchor="end" font-size="20" fill="#fff" font-family="Liberation Sans, Arial, sans-serif">-70.0</text>
<text x="1391.5" y="844.2" text-anchor="middle" font-size="14.8" fill="#fff" font-family="Liberation Sans, Arial, sans-serif">-17</text>
<text x="1419.6" y="864.2" text-anchor="middle" font-size="14.8" fill="#fff" font-family="Liberation Sans, Arial, sans-serif">-12</text>
<text x="1447.6" y="844.2" text-anchor="middle" font-size="14.8" fill="#fff" font-family="Liberation Sans, Arial, sans-serif">-7</text>
<text x="1475.7" y="864.2" text-anchor="middle" font-size="14.8" fill="#fff" font-family="Liberation Sans, Arial, sans-serif">-2</text>
<text x="1504.2" y="844.2" text-anchor="middle" font-size="14.8" fill="#fff" font-family="Liberation Sans, Arial, sans-serif">3</text>
<text x="1532.2" y="864.2" text-anchor="middle" font-size="14.8" fill="#fff" font-family="Liberation Sans, Arial, sans-serif">8</text>
<text x="1560.3" y="844.2" text-anchor="middle" font-size="14.8" fill="#fff" font-family="Liberation Sans, Arial, sans-serif">13</text>
<text x="1588.4" y="864.2" text-anchor="middle" font-size="14.8" fill="#fff" font-family="Liberation Sans, Arial, sans-serif">18</text>
<text x="1616.5" y="844.2" text-anchor="middle" font-size="14.8" fill="#fff" font-family="Liberation Sans, Arial, sans-serif">23</text>
<text x="1644.5" y="864.2" text-anchor="middle" font-size="14.8" fill="#fff" font-family="Liberation Sans, Arial, sans-serif">28</text>
<text x="1672.6" y="844.2" text-anchor="middle" font-size="14.8" fill="#fff" font-family="Liberation Sans, Arial, sans-serif">33</text>
<text x="1700.7" y="864.2" text-anchor="middle" font-size="14.8" fill="#fff" font-family="Liberation Sans, Arial, sans-serif">38</text>
<text x="1728.7" y="844.2" text-anchor="middle" font-size="14.8" fill="#fff" font-family="Liberation Sans, Arial, sans-serif">43</text>
<text x="1756.8" y="864.2" text-anchor="middle" font-size="14.8" fill="#fff" font-family="Liberation Sans, Arial, sans-serif">48</text>
<text x="1784.9" y="844.2" text-anchor="middle" font-size="14.8" fill="#fff" font-family="Liberation Sans, Arial, sans-serif">53</text>
<text x="1813.0" y="864.2" text-anchor="middle" font-size="14.8" fill="#fff" font-family="Liberation Sans, Arial, sans-serif">58</text>
<text x="1841.0" y="844.2" text-anchor="middle" font-size="14.8" fill="#fff" font-family="Liberation Sans, Arial, sans-serif">63</text>
<text x="1612.5" y="892" text-anchor="middle" font-size="20" fill="#fff" font-family="Liberation Sans, Arial, sans-serif">Distance Difference (km)</text>
<text transform="translate(1290.2 639.3) rotate(-90)" text-anchor="middle" font-size="20" fill="#fff" font-family="Liberation Sans, Arial, sans-serif">Magnitude (dB)</text>
<path d="M157.7 376.4h15.1l-7.55 7.5z" fill="#fff"/>
<path d="M855.6 376.4h15.6l-7.8 7.9z" fill="#fff"/>
<path d="M1854 374.4h16l-8 7.6z" fill="#fff"/>
<path d="M1842.6 416.4h17.8l-8.9 15.2z" fill="none" stroke="#d0d8e0" stroke-width="1.1"/>
<path d="M1842.6 -2.0h17.8l-8.9 15.4z" fill="none" stroke="#d0d8e0" stroke-width="1.1"/>
</svg>
<div id="ct"><div style="left:565.9px;top:38.3px;width:19.2px;height:19.2px;background:#e2e2e2;border-radius:50%;"></div>
<div style="left:672.1px;top:38.3px;width:19.2px;height:19.2px;background:#e2e2e2;border-radius:50%;"></div>
<div style="left:575.0px;top:128.9px;width:1.4px;height:6.1px;background:#b8b8b8;"></div>
<div style="left:594.7px;top:130.8px;width:1.4px;height:4.2px;background:#b8b8b8;"></div>
<div style="left:614.4px;top:130.8px;width:1.4px;height:4.2px;background:#b8b8b8;"></div>
<div style="left:634.1px;top:130.8px;width:1.4px;height:4.2px;background:#b8b8b8;"></div>
<div style="left:653.8px;top:130.8px;width:1.4px;height:4.2px;background:#b8b8b8;"></div>
<div style="left:673.5px;top:130.8px;width:1.4px;height:4.2px;background:#b8b8b8;"></div>
<div style="left:693.1px;top:130.8px;width:1.4px;height:4.2px;background:#b8b8b8;"></div>
<div style="left:712.8px;top:130.8px;width:1.4px;height:4.2px;background:#b8b8b8;"></div>
<div style="left:732.5px;top:130.8px;width:1.4px;height:4.2px;background:#b8b8b8;"></div>
<div style="left:752.2px;top:130.8px;width:1.4px;height:4.2px;background:#b8b8b8;"></div>
<div style="left:771.9px;top:128.9px;width:1.4px;height:6.1px;background:#b8b8b8;"></div>
<div style="left:566.0px;top:143.9px;width:213.5px;height:3.2px;background:linear-gradient(#f2f2f2,#d4d4d4);border-radius:1.6px;"></div>
<div style="left:664.4px;top:135.5px;width:20.0px;height:20.0px;background:none;background:radial-gradient(circle at 50% 30%, #dedede 0%, #c2c2c2 30%, #8c8c8c 68%, #3c3c3c 100%);border-radius:50%;"></div>
<div style="left:566.0px;top:233.8px;width:213.5px;height:3.2px;background:linear-gradient(#f2f2f2,#d4d4d4);border-radius:1.6px;"></div>
<div style="left:567.0px;top:225.4px;width:20.0px;height:20.0px;background:none;background:radial-gradient(circle at 50% 30%, #dedede 0%, #c2c2c2 30%, #8c8c8c 68%, #3c3c3c 100%);border-radius:50%;"></div>
<div style="left:566.0px;top:324.0px;width:213.5px;height:3.2px;background:linear-gradient(#f2f2f2,#d4d4d4);border-radius:1.6px;"></div>
<div style="left:567.0px;top:315.6px;width:20.0px;height:20.0px;background:none;background:radial-gradient(circle at 50% 30%, #dedede 0%, #c2c2c2 30%, #8c8c8c 68%, #3c3c3c 100%);border-radius:50%;"></div>
<div style="left:165.2px;top:251.6px;width:20.0px;height:20.0px;background:#e0e0e0;border-radius:50%;"></div>
<div style="left:165.0px;top:313.9px;width:330.0px;height:3.6px;background:#e0e0e0;border-radius:2px;"></div>
<div style="left:353.8px;top:305.8px;width:19.6px;height:19.6px;background:none;background:radial-gradient(circle at 50% 30%, #dedede 0%, #c2c2c2 30%, #8c8c8c 68%, #3c3c3c 100%);border-radius:50%;"></div>
<div style="left:1015.8px;top:457.3px;width:19.0px;height:19.0px;background:#e2e2e2;border-radius:50%;"></div>
<div style="left:1122.3px;top:457.0px;width:19.0px;height:19.0px;background:#e2e2e2;border-radius:50%;"></div>
<div style="left:1024.9px;top:546.9px;width:1.4px;height:6.2px;background:#b8b8b8;"></div>
<div style="left:1044.6px;top:548.8px;width:1.4px;height:4.3px;background:#b8b8b8;"></div>
<div style="left:1064.3px;top:548.8px;width:1.4px;height:4.3px;background:#b8b8b8;"></div>
<div style="left:1084.0px;top:548.8px;width:1.4px;height:4.3px;background:#b8b8b8;"></div>
<div style="left:1103.7px;top:548.8px;width:1.4px;height:4.3px;background:#b8b8b8;"></div>
<div style="left:1123.3px;top:548.8px;width:1.4px;height:4.3px;background:#b8b8b8;"></div>
<div style="left:1143.0px;top:548.8px;width:1.4px;height:4.3px;background:#b8b8b8;"></div>
<div style="left:1162.7px;top:548.8px;width:1.4px;height:4.3px;background:#b8b8b8;"></div>
<div style="left:1182.4px;top:548.8px;width:1.4px;height:4.3px;background:#b8b8b8;"></div>
<div style="left:1202.1px;top:548.8px;width:1.4px;height:4.3px;background:#b8b8b8;"></div>
<div style="left:1221.8px;top:546.9px;width:1.4px;height:6.2px;background:#b8b8b8;"></div>
<div style="left:1015.8px;top:562.2px;width:216.9px;height:3.2px;background:linear-gradient(#f2f2f2,#d4d4d4);border-radius:1.6px;"></div>
<div style="left:1035.6px;top:553.8px;width:20.0px;height:20.0px;background:none;background:radial-gradient(circle at 50% 30%, #dedede 0%, #c2c2c2 30%, #8c8c8c 68%, #3c3c3c 100%);border-radius:50%;"></div>
<div style="left:1015.8px;top:637.0px;width:216.9px;height:3.2px;background:linear-gradient(#f2f2f2,#d4d4d4);border-radius:1.6px;"></div>
<div style="left:1039.5px;top:628.6px;width:20.0px;height:20.0px;background:none;background:radial-gradient(circle at 50% 30%, #dedede 0%, #c2c2c2 30%, #8c8c8c 68%, #3c3c3c 100%);border-radius:50%;"></div>
<div style="left:1015.8px;top:712.3px;width:216.9px;height:3.2px;background:linear-gradient(#f2f2f2,#d4d4d4);border-radius:1.6px;"></div>
<div style="left:1016.6px;top:703.9px;width:20.0px;height:20.0px;background:none;background:radial-gradient(circle at 50% 30%, #dedede 0%, #c2c2c2 30%, #8c8c8c 68%, #3c3c3c 100%);border-radius:50%;"></div>
<div style="left:1032.7px;top:780.3px;width:17.0px;height:17.0px;background:#ffffff;box-sizing:border-box;border:2px solid #c4c4c4;border-radius:50%;"></div>
<div style="left:1032.7px;top:810.2px;width:17.0px;height:17.0px;background:#ffffff;box-sizing:border-box;border:2px solid #c4c4c4;border-radius:50%;"></div>
<div style="left:1036.6px;top:814.1px;width:9.2px;height:9.2px;background:#3a3a3a;border-radius:50%;"></div>
<div style="left:1032.7px;top:840.5px;width:17.0px;height:17.0px;background:#ffffff;box-sizing:border-box;border:2px solid #c4c4c4;border-radius:50%;"></div></div>
<svg width="1869" height="903" viewBox="0 0 1869 903"><path d="M677.3 43.5l8.8 8.8M686.1 43.5l-8.8 8.8" stroke="#4c4c4c" stroke-width="3.1" stroke-linecap="round"/></svg>
<svg id="tx" width="1869" height="903" viewBox="0 0 1869 903" font-family="Liberation Sans, Arial, sans-serif">
<text transform="translate(16.84 91.0) scale(0.9227 1)" font-size="54.19" fill="#ffff20">0</text>
<text transform="translate(48.23 91.0) scale(0.9296 1)" font-size="69.83" fill="#ffff20">.</text>
<text transform="translate(67.60 91.0) scale(1.0248 1)" font-size="54.19" fill="#ffff20">218</text>
<text transform="translate(161.40 91.0) scale(1.0081 1)" font-size="69.83" fill="#ffff20">.</text>
<text transform="translate(182.75 91.0) scale(1.0020 1)" font-size="54.19" fill="#ffff20">640</text>
<text transform="translate(276.40 91.0) scale(0.9165 1)" font-size="69.83" fill="#ffff20">.</text>
<text transform="translate(297.31 91.0) scale(1.0003 1)" font-size="54.19" fill="#ffff20">000</text>
<text transform="translate(396.78 91.0) scale(0.9503 1)" font-size="54.19" fill="#ffff20">Hz</text>
<text transform="translate(14.74 150.2) scale(1.0381 1)" font-size="22.35" fill="#f01414">43</text>
<text transform="translate(46.74 150.2) scale(1.0485 1)" font-size="22.35" fill="#f01414">ppm</text>
<text transform="translate(97.33 150.2) scale(1.0250 1)" font-size="22.35" fill="#f01414">Correction</text>
<text transform="translate(24.79 212.6) scale(1.1166 1)" font-size="23.18" fill="#d6d6d6">Connection</text>
<text transform="translate(192.77 212.6) scale(1.0639 1)" font-size="23.18" fill="#d6d6d6">Recorder</text>
<text transform="translate(332.16 212.6) scale(1.0184 1)" font-size="23.18" fill="#ffffff">FC0013</text>
<text transform="translate(24.70 270.9) scale(0.9321 1)" font-size="25.56" fill="#ffffff">AGC</text>
<text transform="translate(189.80 273.5) scale(1.0808 1)" font-size="23.74" fill="#ffffff">On/Off</text>
<text transform="translate(23.47 329.6) scale(1.0243 1)" font-size="25.56" fill="#ffffff">Gain</text>
<text transform="translate(15.64 391.0) scale(1.0263 1)" font-size="22.35" fill="#ffffff" font-style="italic">DAB+</text>
<text transform="translate(103.83 387.0) scale(0.9586 1)" font-size="19.55" fill="#ffffff">11B</text>
<text transform="translate(228.19 389.0) scale(0.9866 1)" font-size="23.46" fill="#6cbc6c">EId: 1124</text>
<text transform="translate(354.19 389.0) scale(0.9861 1)" font-size="23.46" fill="#6ec21c">NDR MV HRO</text>
<text transform="translate(532.75 389.0) scale(1.0490 1)" font-size="23.46" fill="#6cbc6c">2023-11-11</text>
<text transform="translate(668.63 388.8) scale(1.0066 1)" font-size="22.77" fill="#ffffff">21:10:12 Z</text>
<text transform="translate(1798.86 385.0) scale(0.9431 1)" font-size="19.55" fill="#ffffff">DAB</text>
<text transform="translate(6.21 444.0) scale(1.0341 1)" font-size="28.35" fill="#ffff20">No</text>
<text transform="translate(55.52 444.0) scale(0.9902 1)" font-size="28.35" fill="#ffff20">Service</text>
<text transform="translate(157.29 444.0) scale(1.0227 1)" font-size="28.35" fill="#ffff20">Selected</text>
<text transform="translate(7.99 490.9) scale(1.0017 1)" font-size="23.18" fill="#ffffff">NDR 1 MV HRO</text>
<text transform="translate(7.96 528.9) scale(1.0139 1)" font-size="23.18" fill="#ffffff">NDR 2 MV</text>
<text transform="translate(7.99 566.8) scale(1.0008 1)" font-size="23.18" fill="#ffffff">NDR Blue</text>
<text transform="translate(7.93 604.8) scale(1.0307 1)" font-size="23.18" fill="#ffffff">NDR Info MV</text>
<text transform="translate(7.97 642.8) scale(1.0110 1)" font-size="23.18" fill="#ffffff">NDR Info Spezial</text>
<text transform="translate(7.94 680.8) scale(1.0242 1)" font-size="23.18" fill="#ffffff">NDR Kultur</text>
<text transform="translate(8.00 718.7) scale(0.9962 1)" font-size="23.18" fill="#ffffff">NDR Schlager</text>
<text transform="translate(8.04 756.7) scale(0.9734 1)" font-size="23.18" fill="#ffffff">N-JOY</text>
<text transform="translate(307.33 444.0) scale(1.0115 1)" font-size="27.51" fill="#ffffff">Service</text>
<text transform="translate(408.49 444.0) scale(1.0967 1)" font-size="27.51" fill="#ffffff">Quality</text>
<text transform="translate(314.79 503.8) scale(0.9375 1)" font-size="20.67" fill="#ffffff">SNR (dB)</text>
<text transform="translate(313.85 550.4) scale(0.9597 1)" font-size="20.67" fill="#ffffff">FIC (ok %)</text>
<text transform="translate(313.86 596.5) scale(0.9509 1)" font-size="20.67" fill="#ffffff">RS (ok %)</text>
<text transform="translate(313.72 642.0) scale(1.0401 1)" font-size="20.67" fill="#ffffff">Null Symbol</text>
<text transform="translate(314.76 688.1) scale(0.9916 1)" font-size="20.67" fill="#ffffff">SymbolTime (ms)</text>
<text transform="translate(313.81 734.0) scale(0.9862 1)" font-size="20.67" fill="#ffffff">FrameTime (ms)</text>
<text transform="translate(507.88 502.2) scale(0.9918 1)" font-size="17.74" fill="#ffffff">25,9</text>
<text transform="translate(510.29 548.7) scale(0.9984 1)" font-size="17.74" fill="#ffffff">100</text>
<text transform="translate(508.15 687.4) scale(0.9835 1)" font-size="17.74" fill="#ffffff">0,46</text>
<text transform="translate(507.92 733.7) scale(0.9432 1)" font-size="17.74" fill="#ffffff">96,1</text>
<text transform="translate(658.60 451.7) scale(0.9720 1)" font-size="24.02" fill="#dedede">AAC</text>
<text transform="translate(845.68 451.7) scale(1.0839 1)" font-size="24.02" fill="#dedede">Options</text>
<text transform="translate(632.97 500.6) scale(0.9755 1)" font-size="24.02" fill="#dedede">Sync</text>
<text transform="translate(775.33 500.5) scale(0.9931 1)" font-size="24.02" fill="#ffffff">TII</text>
<text transform="translate(893.40 500.5) scale(1.0849 1)" font-size="24.02" fill="#dedede">Audio</text>
<text transform="translate(597.84 601.6) scale(1.0752 1)" font-size="20.95" fill="#ffffff">Pattern</text>
<text transform="translate(698.88 601.6) scale(1.1138 1)" font-size="20.95" fill="#ffffff">MainId</text>
<text transform="translate(798.41 601.6) scale(1.0526 1)" font-size="20.95" fill="#ffffff">SubId</text>
<text transform="translate(885.59 601.6) scale(1.0806 1)" font-size="20.95" fill="#ffffff">Strength</text>
<text transform="translate(600.65 646.5) scale(1.1023 1)" font-size="18.99" fill="#ffffff">0x59</text>
<text transform="translate(701.49 646.5) scale(1.1301 1)" font-size="18.99" fill="#ffffff">22</text>
<text transform="translate(800.36 646.5) scale(1.0457 1)" font-size="18.99" fill="#ffffff">1</text>
<text transform="translate(888.37 646.5) scale(1.0588 1)" font-size="18.99" fill="#ffffff">0.98</text>
<text transform="translate(600.65 683.7) scale(1.1023 1)" font-size="18.99" fill="#ffffff">0x59</text>
<text transform="translate(701.49 683.7) scale(1.1301 1)" font-size="18.99" fill="#ffffff">22</text>
<text transform="translate(800.88 683.7) scale(1.0925 1)" font-size="18.99" fill="#ffffff">4</text>
<text transform="translate(888.38 683.7) scale(1.0501 1)" font-size="18.99" fill="#ffffff">0.54</text>
<text transform="translate(600.65 721.3) scale(1.1023 1)" font-size="18.99" fill="#ffffff">0x59</text>
<text transform="translate(701.49 721.3) scale(1.1301 1)" font-size="18.99" fill="#ffffff">22</text>
<text transform="translate(800.84 721.3) scale(1.0782 1)" font-size="18.99" fill="#ffffff">2</text>
<text transform="translate(888.38 721.3) scale(1.0448 1)" font-size="18.99" fill="#ffffff">0.15</text>
<text transform="translate(1287.17 431.2) scale(0.9690 1)" font-size="22.63" fill="#ffffff">Channel</text>
<text transform="translate(1374.15 431.2) scale(0.9904 1)" font-size="22.63" fill="#ffffff">Impulse</text>
<text transform="translate(1458.45 431.2) scale(0.9335 1)" font-size="22.63" fill="#ffffff">Response</text>
<text transform="translate(1560.07 431.2) scale(0.8803 1)" font-size="22.63" fill="#ffffff">(CIR)</text>
<text transform="translate(901.52 12.6) scale(1.0078 1)" font-size="22.63" fill="#ffffff">Frontend</text>
<text transform="translate(1040.59 473.6) scale(0.9761 1)" font-size="17.18" fill="#ffffff">Freeze</text>
<text transform="translate(1147.77 473.6) scale(1.0285 1)" font-size="17.18" fill="#ffffff">Gradient</text>
<text transform="translate(1022.54 534.5) scale(1.0483 1)" font-size="17.18" fill="#ffffff">Smoothing Level</text>
<text transform="translate(1022.54 615.4) scale(1.0468 1)" font-size="17.18" fill="#ffffff">Zoom X</text>
<text transform="translate(1022.45 691.2) scale(1.0182 1)" font-size="17.18" fill="#ffffff">Zoom Y</text>
<text transform="translate(1023.00 765.6) scale(1.0167 1)" font-size="17.18" fill="#ffffff">x-Axis</text>
<text transform="translate(1058.87 795.4) scale(0.9930 1)" font-size="17.18" fill="#ffffff">Samples</text>
<text transform="translate(1058.02 825.4) scale(1.0278 1)" font-size="17.18" fill="#ffffff">Distance</text>
<text transform="translate(1059.12 855.4) scale(1.0336 1)" font-size="17.18" fill="#ffffff">Time</text>
<text transform="translate(590.29 54.8) scale(0.9781 1)" font-size="17.18" fill="#ffffff">Freeze</text>
<text transform="translate(697.36 54.8) scale(1.0439 1)" font-size="17.18" fill="#ffffff">Gradient</text>
<text transform="translate(572.74 117.0) scale(1.0467 1)" font-size="17.18" fill="#ffffff">Smoothing Level</text>
<text transform="translate(573.04 213.2) scale(1.0417 1)" font-size="17.18" fill="#ffffff">Zoom X</text>
<text transform="translate(573.05 303.8) scale(1.0165 1)" font-size="17.18" fill="#ffffff">Zoom Y</text>
</svg>
</body></html>
